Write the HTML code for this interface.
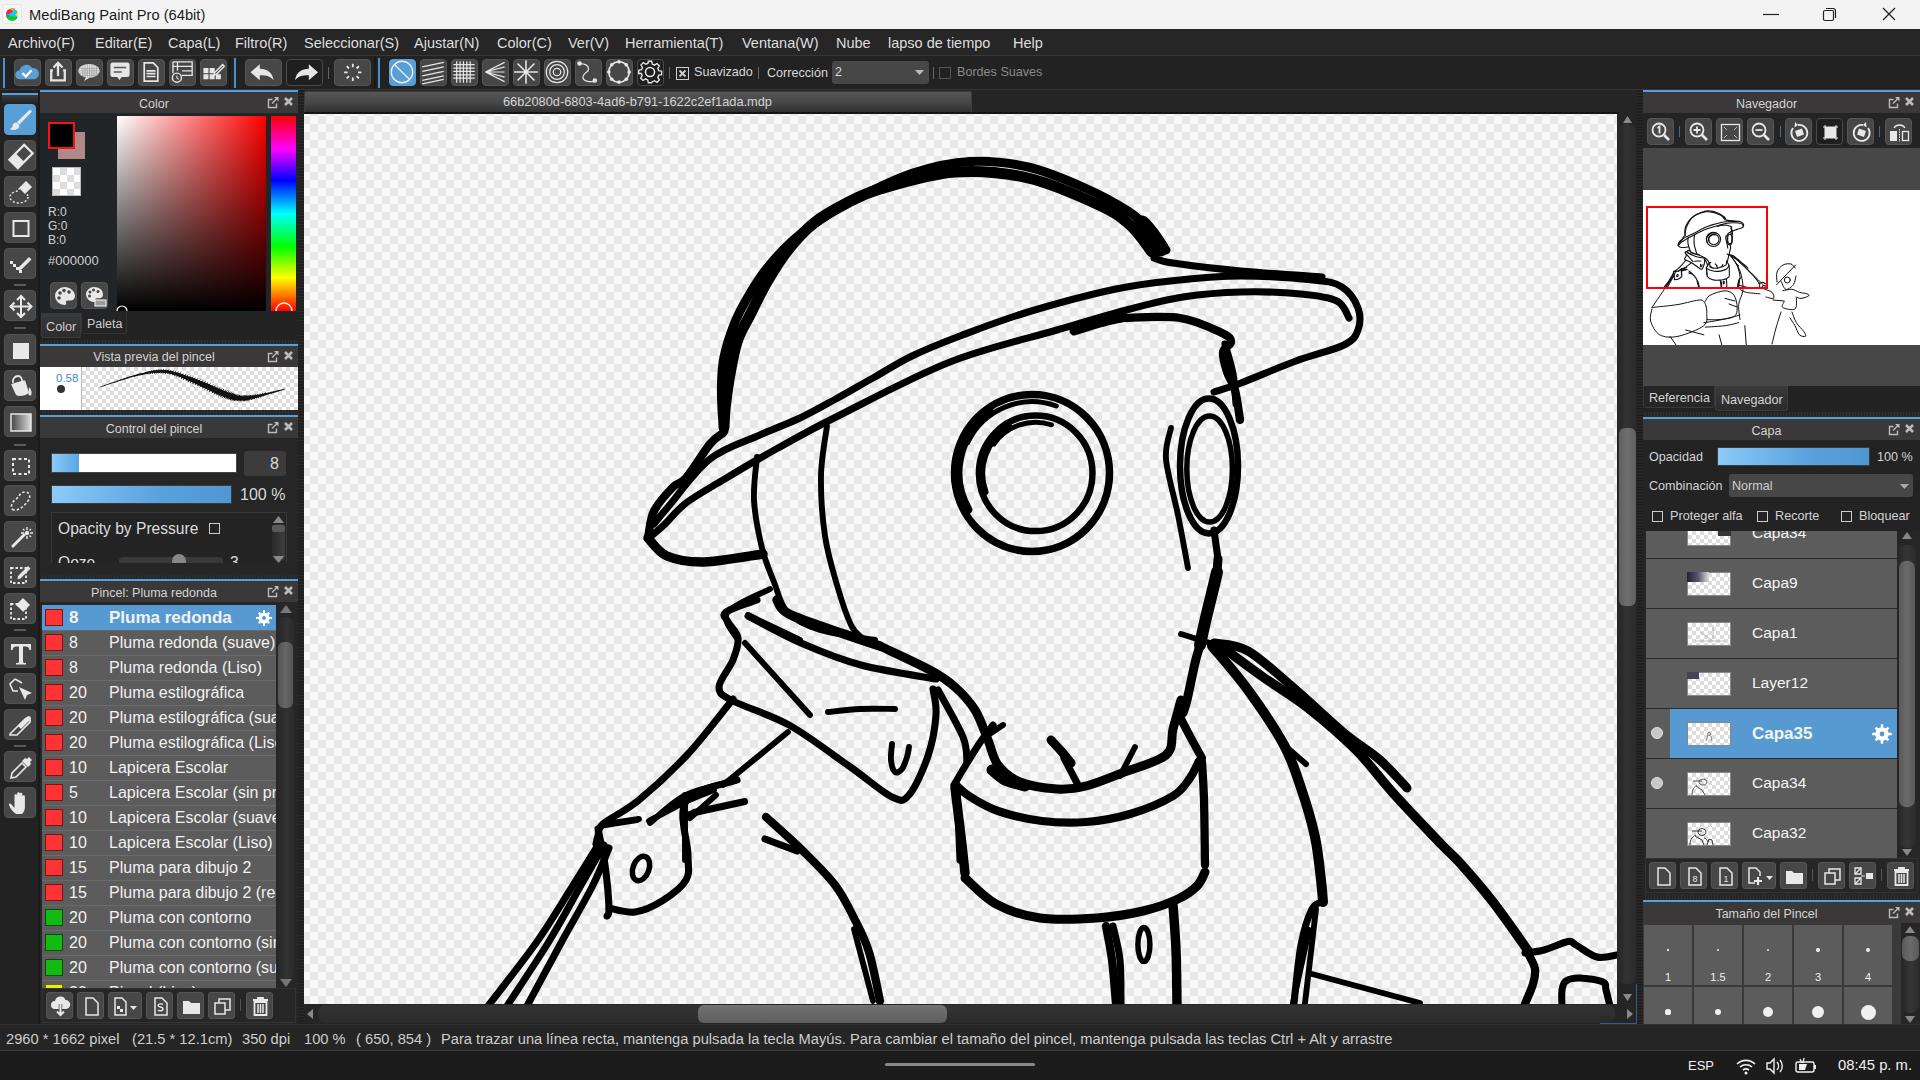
<!DOCTYPE html>
<html><head><meta charset="utf-8">
<style>
*{margin:0;padding:0;box-sizing:border-box}
html,body{width:1920px;height:1080px;overflow:hidden;background:#252525;font-family:"Liberation Sans",sans-serif;color:#d8d8d8}
.a{position:absolute}
.t{position:absolute;white-space:nowrap;line-height:1}
.b{position:absolute;width:27px;height:27px;background:#474747;border:1px solid #555;border-radius:4px}
.b svg,.tb svg,.lb svg{position:absolute;left:0;top:0}
.tt svg{transform:translate(-1.5px,-1.5px) scale(1.13)}
.tw svg{transform:translate(-0.7px,-1.2px) scale(1.15)}
.tb{position:absolute;left:4px;width:32px;height:31px;background:#474747;border:1px solid #525252;border-radius:4px}
.lb{position:absolute;width:27px;height:27px;background:#474747;border:1px solid #555;border-radius:3px}
.ph{position:absolute;height:23px;background:#3a3838;border-top:2px solid #55a0dc}
.pht{position:absolute;top:4px;left:0;width:100%;text-align:center;font-size:12.5px;color:#d4d4d4;line-height:1}
.chk{background-image:linear-gradient(45deg,#e8e8e8 25%,transparent 25%,transparent 75%,#e8e8e8 75%),linear-gradient(45deg,#e8e8e8 25%,transparent 25%,transparent 75%,#e8e8e8 75%);background-color:#f8f8f8}
.chk2{background-image:linear-gradient(45deg,#ddd 25%,transparent 25%,transparent 75%,#ddd 75%),linear-gradient(45deg,#ddd 25%,transparent 25%,transparent 75%,#ddd 75%);background-color:#fff;background-size:10px 10px;background-position:0 0,5px 5px}
.m{position:absolute;top:36px;font-size:14.5px;color:#dedede;white-space:nowrap;line-height:1}
.vl{position:absolute;width:1px;background:#666}
</style></head><body>
<!-- title bar -->
<div class="a" style="left:0;top:0;width:1920px;height:29px;background:#f3f3f3"></div>
<svg class="a" style="left:2px;top:4px" width="20" height="20" viewBox="0 0 20 20">
<rect x="0.5" y="0.5" width="19" height="19" rx="3" fill="#f7f7f7" stroke="#e4e4e4"/>
<circle cx="10" cy="10.5" r="6" fill="#14c8f0"/>
<path d="M4 10.5a6 6 0 0 1 4-5.6l3 2.2L7.5 10z" fill="#f22"/>
<path d="M8 4.9a6 6 0 0 1 5.5-.4L11 7.1z" fill="#f5a040"/>
<path d="M4.5 13a6 6 0 0 0 11 .5L10 12z" fill="#1c1"/>
<path d="M4 10.5a6 6 0 0 0 1.5 3.5L8 11.5z" fill="#3a7ad8"/>
<path d="M15.5 8a6 6 0 0 1 .5 4.5L13 11z" fill="#ee0"/>
</svg>
<div class="t" style="left:29px;top:8px;font-size:14.7px;color:#1b1b1b">MediBang Paint Pro (64bit)</div>
<svg class="a" style="left:1750px;top:0" width="170" height="29" viewBox="0 0 170 29">
<path d="M13 14.5h16" stroke="#222" stroke-width="1.2"/>
<rect x="73.5" y="10.5" width="10" height="10" rx="1.5" fill="none" stroke="#222" stroke-width="1.2"/>
<path d="M76 8.5h7a2.5 2.5 0 0 1 2.5 2.5v7" fill="none" stroke="#222" stroke-width="1.2"/>
<path d="M133 8l12 12M145 8l-12 12" stroke="#222" stroke-width="1.3"/>
</svg>

<!-- menu bar -->
<div class="a" style="left:0;top:29px;width:1920px;height:27px;background:#262626"></div>
<div class="m" style="left:8px">Archivo(F)</div>
<div class="m" style="left:95px">Editar(E)</div>
<div class="m" style="left:168px">Capa(L)</div>
<div class="m" style="left:235px">Filtro(R)</div>
<div class="m" style="left:304px">Seleccionar(S)</div>
<div class="m" style="left:414px">Ajustar(N)</div>
<div class="m" style="left:497px">Color(C)</div>
<div class="m" style="left:568px">Ver(V)</div>
<div class="m" style="left:625px">Herramienta(T)</div>
<div class="m" style="left:742px">Ventana(W)</div>
<div class="m" style="left:836px">Nube</div>
<div class="m" style="left:888px">lapso de tiempo</div>
<div class="m" style="left:1013px">Help</div>

<!-- toolbar -->
<div class="a" style="left:0;top:55px;width:1920px;height:35px;background:#252525;border-top:1px solid #383838;border-bottom:1px solid #353535"></div>
<div class="a" style="left:2px;top:56px;width:229px;height:33px;background:#222;border-right:2px solid #1a1a1a"></div>
<div class="a" style="left:232px;top:56px;width:144px;height:33px;background:#222;border-right:2px solid #1a1a1a"></div>
<div class="a" style="left:376px;top:56px;width:1544px;height:33px;background:#222"></div>
<div class="a" style="left:3px;top:58px;width:2px;height:30px;background:#4d8fcc"></div>
<div class="a" style="left:234px;top:58px;width:2px;height:30px;background:#4d8fcc"></div>
<div class="a" style="left:378px;top:58px;width:2px;height:30px;background:#4d8fcc"></div>
<div class="vl" style="left:328px;top:67px;height:12px"></div>
<div class="vl" style="left:669px;top:67px;height:12px"></div>
<div class="vl" style="left:758px;top:67px;height:12px"></div>
<div class="vl" style="left:933px;top:67px;height:12px"></div>

<div class="b tt" style="left:14px;top:59px"><svg width="27" height="27" viewBox="0 0 27 27"><path d="M7 20a4 4 0 0 1 0-8a6 6 0 0 1 11-2a4.5 4.5 0 0 1 2 10z" fill="#5a9fd8"/><path d="M9.5 14.5l3 3l5-5.5" fill="none" stroke="#fff" stroke-width="2"/></svg></div>
<div class="b tt" style="left:45px;top:59px"><svg width="27" height="27" viewBox="0 0 27 27"><path d="M9 12H7.5v9h12v-9H18" fill="none" stroke="#e6e6e6" stroke-width="2"/><path d="M13.5 17V6M9.5 9.5l4-4l4 4" fill="none" stroke="#e6e6e6" stroke-width="2"/></svg></div>
<div class="b tt" style="left:76px;top:59px"><svg width="27" height="27" viewBox="0 0 27 27"><ellipse cx="13.5" cy="12.5" rx="9.5" ry="6" fill="#e6e6e6"/><path d="M11 18l-2 3.5l5-3z" fill="#e6e6e6"/><path d="M8 8.5v8M10 7v11M12 7v11M14 7v11M16 7v11M18 7v11M20 8v8M5 10.5h17M4 12.5h19M4 14.5h19M6 16.5h15" stroke="#888" stroke-width="0.5"/></svg></div>
<div class="b tt" style="left:107px;top:59px"><svg width="27" height="27" viewBox="0 0 27 27"><path d="M5 7a2 2 0 0 1 2-2h13a2 2 0 0 1 2 2v9a2 2 0 0 1-2 2h-5l-2 2.5l-2-2.5H7a2 2 0 0 1-2-2z" fill="#e6e6e6"/><path d="M8 9.5h11M8 13.5h7" stroke="#555" stroke-width="1.5"/></svg></div>
<div class="b tt" style="left:138px;top:59px"><svg width="27" height="27" viewBox="0 0 27 27"><path d="M7.5 5.5h8l4 4v12h-12z" fill="none" stroke="#e6e6e6" stroke-width="1.5"/><path d="M9.5 12.5h8M9.5 15h8M9.5 17.5h8" stroke="#e6e6e6" stroke-width="1.5"/></svg></div>
<div class="b tt" style="left:169px;top:59px"><svg width="27" height="27" viewBox="0 0 27 27"><path d="M5.5 4.5h17v12h-9M5.5 4.5v10M5.5 8.5h17M9.5 4.5v8M13.5 12.5h9" fill="none" stroke="#e6e6e6" stroke-width="1.2"/><circle cx="9" cy="18.5" r="4" fill="#474747" stroke="#e6e6e6" stroke-width="1.3"/><path d="M9 16.5v2l1.5 1.5" stroke="#e6e6e6" stroke-width="1"/></svg></div>
<div class="b tt" style="left:200px;top:59px"><svg width="27" height="27" viewBox="0 0 27 27"><path d="M5 10h4.5v4.5H5zM10.5 10h4.5v4.5h-4.5zM5 15.5h4.5V20H5zM10.5 15.5h4.5V20h-4.5zM16 15.5h4.5V20H16z" fill="#e6e6e6"/><path d="M15 14l7-7l1.5 1.5l-7 7l-2.3.8z" fill="none" stroke="#e6e6e6" stroke-width="1.3"/></svg></div>

<div class="b tw" style="left:245px;top:59px;width:37px"><svg width="37" height="27" viewBox="0 0 37 27"><path d="M7 13.5l8-7v4c6 0 11 3 12 10c-2.5-3.5-6-4.5-12-4.5v4.5z" fill="#e6e6e6"/></svg></div>
<div class="b tw" style="left:286px;top:59px;width:37px;background:#1f1f1f;border-color:#4a4a4a"><svg width="37" height="27" viewBox="0 0 37 27"><path d="M30 13.5l-8-7v4c-6 0-11 3-12 10c2.5-3.5 6-4.5 12-4.5v4.5z" fill="#e6e6e6"/></svg></div>
<div class="b tw" style="left:334px;top:59px;width:37px"><svg width="37" height="27" viewBox="0 0 37 27"><path d="M18.5 6v3M18.5 18v3M11 13.5h3M23 13.5h3M13.2 8.2l2 2M21.8 16.8l2 2M23.8 8.2l-2 2M15.2 16.8l-2 2" stroke="#e6e6e6" stroke-width="1.6"/></svg></div>

<div class="b tt" style="left:389px;top:59px;background:#579fd6;border-color:#579fd6"><svg width="27" height="27" viewBox="0 0 27 27"><circle cx="13.5" cy="13.5" r="9.5" fill="none" stroke="#eee" stroke-width="1.2"/><path d="M7 7l13 13" stroke="#eee" stroke-width="1.2"/></svg></div>
<div class="b tt" style="left:420px;top:59px"><svg width="27" height="27" viewBox="0 0 27 27"><path d="M4 9l19-4M4 13l19-4M4 17l19-4M4 21l19-4M4 24l19-4" stroke="#e6e6e6" stroke-width="1.1"/></svg></div>
<div class="b tt" style="left:451px;top:59px"><svg width="27" height="27" viewBox="0 0 27 27"><path d="M7 4v19M10 4v19M13 4v19M16 4v19M19 4v19M4 7h19M4 10h19M4 13h19M4 16h19M4 19h19" stroke="#e6e6e6" stroke-width="1.1"/></svg></div>
<div class="b tt" style="left:482px;top:59px"><svg width="27" height="27" viewBox="0 0 27 27"><path d="M5 13.5L22 5M5 13.5L22 9M5 13.5h17M5 13.5L22 18M5 13.5L22 22" stroke="#e6e6e6" stroke-width="1.1"/></svg></div>
<div class="b tt" style="left:513px;top:59px"><svg width="27" height="27" viewBox="0 0 27 27"><path d="M13.5 3v21M3 13.5h21M6 6l15 15M21 6L6 21" stroke="#e6e6e6" stroke-width="1.4"/></svg></div>
<div class="b tt" style="left:544px;top:59px"><svg width="27" height="27" viewBox="0 0 27 27" fill="none" stroke="#e6e6e6" stroke-width="1.1"><circle cx="13.5" cy="13.5" r="9.5"/><circle cx="13.5" cy="13.5" r="6.5"/><circle cx="13.5" cy="13.5" r="3.3"/></svg></div>
<div class="b tt" style="left:575px;top:59px"><svg width="27" height="27" viewBox="0 0 27 27"><path d="M6 6c5 0 8 2 8 5s-5 3-5 7s5 4 10 4" fill="none" stroke="#e6e6e6" stroke-width="1.1"/><circle cx="6" cy="6" r="2" fill="#e6e6e6"/><circle cx="19.5" cy="21" r="2" fill="#e6e6e6"/></svg></div>
<div class="b tt" style="left:606px;top:59px"><svg width="27" height="27" viewBox="0 0 27 27"><circle cx="13.5" cy="13.5" r="9" fill="none" stroke="#e6e6e6" stroke-width="1.4"/><g fill="#e6e6e6"><circle cx="13.5" cy="4.5" r="1.6"/><circle cx="13.5" cy="22.5" r="1.6"/><circle cx="4.5" cy="13.5" r="1.6"/><circle cx="22.5" cy="13.5" r="1.6"/><circle cx="7.1" cy="7.1" r="1.6"/><circle cx="19.9" cy="7.1" r="1.6"/><circle cx="7.1" cy="19.9" r="1.6"/><circle cx="19.9" cy="19.9" r="1.6"/></g></svg></div>
<div class="b tt" style="left:637px;top:59px;background:#1f1f1f;border-color:#4a4a4a"><svg width="27" height="27" viewBox="0 0 27 27"><path d="M12 4h3l.5 2.5l2 .9l2.2-1.4l2.1 2.1l-1.4 2.2l.9 2l2.5.5v3l-2.5.5l-.9 2l1.4 2.2l-2.1 2.1l-2.2-1.4l-2 .9L15 23h-3l-.5-2.5l-2-.9l-2.2 1.4l-2.1-2.1l1.4-2.2l-.9-2L3.5 15v-3l2.5-.5l.9-2l-1.4-2.2l2.1-2.1l2.2 1.4l2-.9z" fill="none" stroke="#e6e6e6" stroke-width="1.2"/><circle cx="13.5" cy="13.5" r="4" fill="none" stroke="#e6e6e6" stroke-width="1.4"/></svg></div>

<svg class="a" style="left:676px;top:67px" width="13" height="13" viewBox="0 0 13 13"><rect x="0.5" y="0.5" width="12" height="12" fill="none" stroke="#d0d0d0"/><path d="M3.5 3.5l6 6M9.5 3.5l-6 6" stroke="#d0d0d0" stroke-width="1.8"/></svg>
<div class="t" style="left:694px;top:66px;font-size:12.6px;color:#d8d8d8">Suavizado</div>
<div class="t" style="left:767px;top:67px;font-size:12.6px;color:#d8d8d8">Corrección</div>
<div class="a" style="left:832px;top:61px;width:97px;height:23px;background:#474747;border-radius:3px"></div>
<div class="t" style="left:835px;top:66px;font-size:12.6px;color:#d8d8d8">2</div>
<svg class="a" style="left:915px;top:70px" width="9" height="6" viewBox="0 0 9 6"><path d="M0 0h9L4.5 5z" fill="#bbb"/></svg>
<svg class="a" style="left:939px;top:67px" width="12" height="12" viewBox="0 0 12 12"><rect x="0.5" y="0.5" width="11" height="11" fill="none" stroke="#555"/></svg>
<div class="t" style="left:957px;top:66px;font-size:12.6px;color:#8a8a8a">Bordes Suaves</div>

<!-- canvas tab strip -->
<div class="a" style="left:304px;top:90px;width:1334px;height:24px;background:#252525"></div>
<div class="a" style="left:304px;top:91px;width:668px;height:22px;background:linear-gradient(#575757,#464646 50%,#333 90%,#2c2c2c);border:1px solid #3c3c3c;border-bottom:none;border-radius:2px 2px 0 0"></div>
<div class="t" style="left:503px;top:96px;font-size:12.8px;color:#d4d4d4">66b2080d-6803-4ad6-b791-1622c2ef1ada.mdp</div>
<div class="a" style="left:304px;top:112px;width:1314px;height:2px;background:#151515"></div>

<!-- canvas -->
<div class="a chk" style="left:304px;top:114px;width:1313px;height:890px;background-size:16px 16px;background-position:6px 2px,14px 10px"></div>
<svg class="a" style="left:0;top:0" width="1920" height="1080" viewBox="0 0 1920 1080"><defs><clipPath id="cc"><rect x="304" y="114" width="1313" height="890"/></clipPath></defs><g clip-path="url(#cc)" fill="none" stroke="#000" stroke-linecap="round" stroke-linejoin="round"><path d="M1166.0 250.0C1163.3 246.7 1156.3 236.5 1150.0 230.0C1143.7 223.5 1138.8 218.0 1128.0 211.0C1117.2 204.0 1101.7 195.3 1085.0 188.0C1068.3 180.7 1047.2 171.4 1028.0 167.0C1008.8 162.6 989.2 160.5 970.0 161.5C950.8 162.5 932.2 166.8 913.0 173.0C893.8 179.2 870.5 191.2 855.0 199.0C839.5 206.8 830.8 212.7 820.0 220.0C809.2 227.3 799.3 234.3 790.0 243.0C780.7 251.7 771.5 262.2 764.0 272.0C756.5 281.8 750.2 292.8 745.0 302.0C739.8 311.2 736.5 317.8 733.0 327.0C729.5 336.2 725.9 347.7 724.0 357.0C722.1 366.3 721.8 374.2 721.5 383.0C721.2 391.8 721.6 402.0 722.0 410.0C722.4 418.0 723.7 427.5 724.0 431.0" stroke-width="9"/><path d="M1152.0 252.0C1148.3 247.5 1138.8 232.8 1130.0 225.0C1121.2 217.2 1116.0 212.8 1099.0 205.0C1082.0 197.2 1052.0 183.5 1028.0 178.0C1004.0 172.5 979.7 170.2 955.0 172.0C930.3 173.8 898.3 183.7 880.0 189.0C861.7 194.3 856.0 198.3 845.0 204.0C834.0 209.7 823.5 215.3 814.0 223.0C804.5 230.7 795.8 240.2 788.0 250.0C780.2 259.8 773.3 271.2 767.0 282.0C760.7 292.8 755.0 305.0 750.0 315.0C745.0 325.0 740.5 331.2 737.0 342.0C733.5 352.8 731.0 368.7 729.0 380.0C727.0 391.3 725.8 402.2 725.0 410.0C724.2 417.8 724.2 424.2 724.0 427.0" stroke-width="11"/><path d="M1142.0 224.0C1143.7 226.0 1149.0 232.0 1152.0 236.0C1155.0 240.0 1158.7 246.0 1160.0 248.0" stroke-width="17"/><path d="M723.0 433.0C720.8 434.8 716.2 436.5 710.0 444.0C703.8 451.5 692.2 470.8 686.0 478.0C679.8 485.2 678.3 481.5 673.0 487.0C667.7 492.5 658.1 503.0 654.0 511.0C649.9 519.0 649.4 531.0 648.5 535.0" stroke-width="8.26"/><path d="M1154.0 258.0C1157.2 258.8 1158.5 260.8 1173.0 263.0C1187.5 265.2 1216.2 268.7 1241.0 271.0C1265.8 273.3 1308.5 276.0 1322.0 277.0" stroke-width="7.08"/><path d="M654.0 524.0C656.3 521.2 658.7 517.8 668.0 507.0C677.3 496.2 694.7 471.0 710.0 459.0C725.3 447.0 745.0 441.8 760.0 435.0C775.0 428.2 787.7 423.8 800.0 418.0C812.3 412.2 821.8 406.7 834.0 400.0C846.2 393.3 860.0 385.3 873.0 378.0C886.0 370.7 897.5 363.0 912.0 356.0C926.5 349.0 940.7 343.3 960.0 336.0C979.3 328.7 1002.0 319.8 1028.0 312.0C1054.0 304.2 1090.7 294.3 1116.0 289.0C1141.3 283.7 1159.2 282.2 1180.0 280.0C1200.8 277.8 1218.8 276.0 1241.0 276.0C1263.2 276.0 1296.2 278.2 1313.0 280.0C1329.8 281.8 1334.5 282.3 1342.0 287.0C1349.5 291.7 1355.3 300.8 1358.0 308.0C1360.7 315.2 1360.3 323.8 1358.0 330.0C1355.7 336.2 1354.3 339.8 1344.0 345.0C1333.7 350.2 1313.2 354.7 1296.0 361.0C1278.8 367.3 1254.7 377.8 1241.0 383.0C1227.3 388.2 1218.5 390.5 1214.0 392.0" stroke-width="7.08"/><path d="M650.0 537.0C652.3 535.0 658.0 530.7 664.0 525.0C670.0 519.3 676.2 510.5 686.0 503.0C695.8 495.5 707.7 489.2 723.0 480.0C738.3 470.8 758.8 458.7 778.0 448.0C797.2 437.3 809.3 430.3 838.0 416.0C866.7 401.7 913.5 376.3 950.0 362.0C986.5 347.7 1027.0 338.8 1057.0 330.0C1087.0 321.2 1109.0 314.5 1130.0 309.0C1151.0 303.5 1164.5 299.8 1183.0 297.0C1201.5 294.2 1221.3 292.5 1241.0 292.0C1260.7 291.5 1285.0 292.5 1301.0 294.0C1317.0 295.5 1329.0 297.0 1337.0 301.0C1345.0 305.0 1347.0 315.2 1349.0 318.0" stroke-width="7.08"/><path d="M648.0 538.0C651.2 541.0 657.7 552.0 667.0 556.0C676.3 560.0 688.0 562.3 704.0 562.0C720.0 561.7 753.2 555.3 763.0 554.0" stroke-width="9.44"/><path d="M1074.0 331.0C1078.3 329.7 1092.2 325.2 1100.0 323.0C1107.8 320.8 1117.5 318.8 1121.0 318.0" stroke-width="9"/><path d="M1121.0 318.0C1130.8 318.0 1163.2 315.5 1180.0 318.0C1196.8 320.5 1213.5 329.0 1222.0 333.0C1230.5 337.0 1230.8 338.8 1231.0 342.0C1231.2 345.2 1223.7 347.0 1223.0 352.0C1222.3 357.0 1225.0 365.7 1227.0 372.0C1229.0 378.3 1232.8 382.0 1235.0 390.0C1237.2 398.0 1239.2 415.0 1240.0 420.0" stroke-width="8.26"/><path d="M757.0 457.0C756.5 464.2 753.2 484.8 754.0 500.0C754.8 515.2 758.7 534.3 762.0 548.0C765.3 561.7 769.7 571.2 774.0 582.0C778.3 592.8 780.3 605.0 788.0 613.0C795.7 621.0 805.5 625.5 820.0 630.0C834.5 634.5 865.8 638.3 875.0 640.0" stroke-width="5.9"/><path d="M827.0 426.0C826.0 434.3 821.3 457.7 821.0 476.0C820.7 494.3 822.3 517.8 825.0 536.0C827.7 554.2 832.7 570.2 837.0 585.0C841.3 599.8 846.8 616.2 851.0 625.0C855.2 633.8 860.2 635.8 862.0 638.0" stroke-width="5.9"/><path d="M1225.0 344.0C1226.3 349.0 1231.2 364.0 1233.0 374.0C1234.8 384.0 1235.5 399.0 1236.0 404.0" stroke-width="7.08"/><path d="M1214.0 530.0L1218.0 559.0" stroke-width="7.08"/><path d="M1218.0 559.0L1217.0 572.0" stroke-width="9"/><path d="M1217.0 572.0C1216.5 574.2 1216.0 576.7 1214.0 585.0C1212.0 593.3 1207.3 612.0 1205.0 622.0C1202.7 632.0 1200.8 641.2 1200.0 645.0" stroke-width="12"/><path d="M1200.0 645.0C1199.2 648.0 1197.2 653.8 1195.0 663.0C1192.8 672.2 1189.0 691.7 1187.0 700.0C1185.0 708.3 1183.7 710.8 1183.0 713.0" stroke-width="9"/><path d="M1171.0 428.0C1170.2 433.2 1164.8 444.5 1166.0 459.0C1167.2 473.5 1174.3 496.8 1178.0 515.0C1181.7 533.2 1186.3 559.2 1188.0 568.0" stroke-width="5.9"/><path d="M880.0 646.0C888.3 650.0 917.5 663.2 930.0 670.0C942.5 676.8 947.5 680.3 955.0 687.0C962.5 693.7 969.5 701.2 975.0 710.0C980.5 718.8 984.2 730.8 988.0 740.0C991.8 749.2 992.7 758.0 998.0 765.0C1003.3 772.0 1010.2 778.0 1020.0 782.0C1029.8 786.0 1046.0 788.3 1057.0 789.0C1068.0 789.7 1075.2 788.7 1086.0 786.0C1096.8 783.3 1108.7 778.2 1122.0 773.0C1135.3 767.8 1157.5 762.3 1166.0 755.0C1174.5 747.7 1170.5 738.2 1173.0 729.0C1175.5 719.8 1179.7 704.8 1181.0 700.0" stroke-width="9"/><path d="M992.0 770.0C994.2 771.7 999.5 777.3 1005.0 780.0C1010.5 782.7 1021.7 785.0 1025.0 786.0" stroke-width="11"/><path d="M954.0 785.0C955.7 782.2 959.8 774.8 964.0 768.0C968.2 761.2 974.2 751.2 979.0 744.0C983.8 736.8 990.7 728.2 993.0 725.0" stroke-width="7.08"/><path d="M956.0 785.0C958.2 786.8 962.0 791.7 969.0 796.0C976.0 800.3 985.8 806.8 998.0 811.0C1010.2 815.2 1027.3 819.2 1042.0 821.0C1056.7 822.8 1071.3 823.2 1086.0 822.0C1100.7 820.8 1115.5 818.3 1130.0 814.0C1144.5 809.7 1163.0 802.0 1173.0 796.0C1183.0 790.0 1185.7 783.8 1190.0 778.0C1194.3 772.2 1197.5 763.8 1199.0 761.0" stroke-width="8.26"/><path d="M955.0 788.0C955.7 793.3 957.8 810.5 959.0 820.0C960.2 829.5 961.0 836.2 962.0 845.0C963.0 853.8 964.5 868.3 965.0 873.0" stroke-width="9.44"/><path d="M1202.0 762.0C1202.3 768.3 1203.5 782.8 1204.0 800.0C1204.5 817.2 1204.8 854.2 1205.0 865.0" stroke-width="8.26"/><path d="M1181.0 719.0C1182.8 722.5 1188.5 733.5 1192.0 740.0C1195.5 746.5 1200.3 755.0 1202.0 758.0" stroke-width="8.26"/><path d="M965.0 878.0C970.2 882.3 983.5 897.3 996.0 904.0C1008.5 910.7 1023.2 915.7 1040.0 918.0C1056.8 920.3 1079.8 919.2 1097.0 918.0C1114.2 916.8 1129.5 914.2 1143.0 911.0C1156.5 907.8 1169.0 903.2 1178.0 899.0C1187.0 894.8 1192.5 890.5 1197.0 886.0C1201.5 881.5 1203.7 874.3 1205.0 872.0" stroke-width="9"/><path d="M1051.0 740.0C1052.8 742.0 1058.7 748.2 1062.0 752.0C1065.3 755.8 1069.5 761.2 1071.0 763.0" stroke-width="9"/><path d="M1064.0 758.0L1078.0 785.0" stroke-width="7.08"/><path d="M1135.0 747.0L1120.0 776.0" stroke-width="5.9"/><path d="M988.0 735.0L1003.0 725.0" stroke-width="5.9"/><path d="M1106.0 926.0C1107.0 931.7 1110.3 947.0 1112.0 960.0C1113.7 973.0 1115.3 996.7 1116.0 1004.0" stroke-width="8.26"/><path d="M1113.0 926.0C1114.2 931.7 1118.7 947.0 1120.0 960.0C1121.3 973.0 1120.8 996.7 1121.0 1004.0" stroke-width="7.08"/><path d="M1173.0 905.0C1173.5 912.5 1175.3 933.5 1176.0 950.0C1176.7 966.5 1176.8 995.0 1177.0 1004.0" stroke-width="9.44"/><path d="M770.0 589.0C762.8 593.0 732.3 604.5 727.0 613.0C721.7 621.5 736.2 635.5 738.0 640.0" stroke-width="5.9"/><path d="M748.0 615.0L800.0 640.0" stroke-width="5.9"/><path d="M757.0 600.0C751.8 602.0 730.8 608.3 726.0 612.0C721.2 615.7 726.0 617.7 728.0 622.0C730.0 626.3 737.2 631.7 738.0 638.0C738.8 644.3 736.2 651.8 733.0 660.0C729.8 668.2 719.0 680.2 719.0 687.0C719.0 693.8 721.3 694.7 733.0 701.0C744.7 707.3 769.7 714.2 789.0 725.0C808.3 735.8 831.8 754.0 849.0 766.0C866.2 778.0 882.0 792.2 892.0 797.0C902.0 801.8 903.0 801.8 909.0 795.0C915.0 788.2 923.5 769.3 928.0 756.0C932.5 742.7 935.2 726.2 936.0 715.0C936.8 703.8 933.5 693.3 933.0 689.0" stroke-width="7.08"/><path d="M748.0 616.0C756.8 620.5 782.2 634.8 801.0 643.0C819.8 651.2 838.5 659.0 861.0 665.0C883.5 671.0 923.5 676.7 936.0 679.0" stroke-width="7.08"/><path d="M777.0 600.0C779.0 602.3 777.8 608.3 789.0 614.0C800.2 619.7 828.8 628.7 844.0 634.0C859.2 639.3 874.0 644.0 880.0 646.0" stroke-width="9.44"/><path d="M745.0 643.0L810.0 715.0" stroke-width="5.9"/><path d="M828.0 712.0C833.3 711.5 848.8 709.5 860.0 709.0C871.2 708.5 889.2 709.0 895.0 709.0" stroke-width="5.9"/><path d="M892.0 744.0C891.8 746.7 890.5 755.3 891.0 760.0C891.5 764.7 893.2 770.5 895.0 772.0C896.8 773.5 900.0 771.5 902.0 769.0C904.0 766.5 905.8 760.7 907.0 757.0C908.2 753.3 908.7 748.7 909.0 747.0" stroke-width="5.9"/><path d="M938.0 690.0C942.2 697.8 958.2 725.0 963.0 737.0C967.8 749.0 966.3 757.8 967.0 762.0" stroke-width="7.08"/><path d="M957.0 788.0L960.0 860.0" stroke-width="7.08"/><path d="M733.0 699.0C725.5 708.2 703.7 737.2 688.0 754.0C672.3 770.8 653.2 788.3 639.0 800.0C624.8 811.7 609.8 818.0 603.0 824.0C596.2 830.0 599.2 832.7 598.0 836.0C596.8 839.3 596.3 842.7 596.0 844.0" stroke-width="7.08"/><path d="M606.0 824.0L639.0 819.0" stroke-width="5.9"/><path d="M649.0 821.0C655.0 817.8 674.2 807.2 685.0 802.0C695.8 796.8 709.2 792.0 714.0 790.0" stroke-width="5.9"/><path d="M685.0 795.0L685.0 860.0" stroke-width="5.9"/><path d="M690.0 814.0L745.0 802.0" stroke-width="5.9"/><path d="M766.0 817.0C772.2 822.7 791.5 839.7 803.0 851.0C814.5 862.3 826.5 873.8 835.0 885.0C843.5 896.2 848.3 906.8 854.0 918.0C859.7 929.2 864.7 938.2 869.0 952.0C873.3 965.8 878.2 992.8 880.0 1001.0" stroke-width="8.26"/><path d="M854.0 929.0L873.0 1001.0" stroke-width="5.9"/><path d="M765.0 839.0L797.0 851.0" stroke-width="7.08"/><path d="M723.0 785.0L788.0 732.0" stroke-width="5.9"/><path d="M598.0 829.0C599.2 835.0 603.2 851.8 605.0 865.0C606.8 878.2 608.7 899.5 609.0 908.0C609.3 916.5 607.3 914.7 607.0 916.0" stroke-width="7.08"/><path d="M609.0 908.0C613.3 908.7 626.2 913.2 635.0 912.0C643.8 910.8 653.5 906.3 662.0 901.0C670.5 895.7 681.7 887.7 686.0 880.0C690.3 872.3 688.0 868.2 688.0 855.0C688.0 841.8 677.8 813.5 686.0 801.0C694.2 788.5 728.5 783.5 737.0 780.0" stroke-width="7.08"/><path d="M605.0 825.0L637.0 820.0" stroke-width="5.9"/><path d="M650.0 823.0C656.0 818.3 671.5 802.2 686.0 795.0C700.5 787.8 728.5 782.5 737.0 780.0" stroke-width="5.9"/><path d="M690.0 818.0L716.0 795.0" stroke-width="5.9"/><path d="M694.0 812.0L745.0 801.0" stroke-width="5.9"/><path d="M600.0 842.0C595.3 849.5 582.7 870.2 572.0 887.0C561.3 903.8 550.0 923.2 536.0 943.0C522.0 962.8 496.0 995.5 488.0 1006.0" stroke-width="7.08"/><path d="M604.0 845.0C600.0 852.0 589.3 870.7 580.0 887.0C570.7 903.3 560.2 923.2 548.0 943.0C535.8 962.8 513.8 995.5 507.0 1006.0" stroke-width="7.08"/><path d="M609.0 848.0C606.2 854.5 600.0 871.2 592.0 887.0C584.0 902.8 571.8 923.2 561.0 943.0C550.2 962.8 532.7 995.5 527.0 1006.0" stroke-width="7.08"/><path d="M1181.0 634.0L1210.0 643.0" stroke-width="5.9"/><path d="M1214.0 643.0C1219.7 644.3 1234.3 643.2 1248.0 651.0C1261.7 658.8 1280.0 676.3 1296.0 690.0C1312.0 703.7 1330.0 721.3 1344.0 733.0C1358.0 744.7 1369.5 750.8 1380.0 760.0C1390.5 769.2 1402.5 783.3 1407.0 788.0" stroke-width="9"/><path d="M1222.0 647.0C1228.8 652.0 1248.7 666.8 1263.0 677.0C1277.3 687.2 1292.5 695.8 1308.0 708.0C1323.5 720.2 1341.8 735.8 1356.0 750.0C1370.2 764.2 1378.8 777.3 1393.0 793.0C1407.2 808.7 1429.8 832.3 1441.0 844.0C1452.2 855.7 1451.3 853.3 1460.0 863.0C1468.7 872.7 1481.5 887.2 1493.0 902.0C1504.5 916.8 1523.0 943.7 1529.0 952.0" stroke-width="9.44"/><path d="M1212.0 646.0C1218.0 653.3 1236.0 673.5 1248.0 690.0C1260.0 706.5 1275.2 728.7 1284.0 745.0C1292.8 761.3 1295.8 772.7 1301.0 788.0C1306.2 803.3 1311.7 821.7 1315.0 837.0C1318.3 852.3 1319.7 869.2 1321.0 880.0C1322.3 890.8 1322.7 898.3 1323.0 902.0" stroke-width="10"/><path d="M1284.0 745.0L1306.0 764.0" stroke-width="5.9"/><path d="M1323.0 902.0C1321.2 903.2 1315.7 901.8 1312.0 909.0C1308.3 916.2 1304.0 929.3 1301.0 945.0C1298.0 960.7 1295.2 993.3 1294.0 1003.0" stroke-width="7.08"/><path d="M1316.0 909.0L1305.0 1003.0" stroke-width="5.9"/><path d="M1309.0 930.0L1293.0 1003.0" stroke-width="5.9"/><path d="M1312.0 974.0L1420.0 1003.0" stroke-width="5.9"/><path d="M1525.0 953.0C1528.2 952.5 1536.8 951.9 1544.0 950.0C1551.2 948.1 1562.7 942.3 1568.0 941.5C1573.3 940.7 1571.2 942.4 1576.0 945.0C1580.8 947.6 1590.2 955.3 1597.0 957.0C1603.8 958.7 1613.7 955.3 1617.0 955.0" stroke-width="7.08"/><path d="M1529.0 955.0C1530.0 957.3 1534.3 964.2 1535.0 969.0C1535.7 973.8 1534.7 978.2 1533.0 984.0C1531.3 989.8 1526.3 1000.7 1525.0 1004.0" stroke-width="8.26"/><path d="M1562.0 1006.0C1562.0 1003.3 1561.3 994.2 1562.0 990.0C1562.7 985.8 1563.0 983.0 1566.0 981.0C1569.0 979.0 1573.8 977.8 1580.0 978.0C1586.2 978.2 1598.7 980.0 1603.0 982.0C1607.3 984.0 1604.8 986.0 1606.0 990.0C1607.2 994.0 1609.3 1003.3 1610.0 1006.0" stroke-width="7.08"/><ellipse cx="1032" cy="473" rx="77.5" ry="78.5" stroke-width="7.5"/><ellipse cx="1035.7" cy="473.3" rx="56.8" ry="57.8" stroke-width="6.5"/><ellipse cx="1209" cy="466" rx="29" ry="67.4" stroke-width="6.5"/><ellipse cx="1209.6" cy="469" rx="22.8" ry="53" stroke-width="5.5"/><ellipse cx="641" cy="868.5" rx="8" ry="12.7" stroke-width="5.5" transform="rotate(20 641 868.5)"/><ellipse cx="1143.9" cy="944.5" rx="6" ry="17" stroke-width="5.5"/><path d="M967.7 442.7A71 71 0 0 1 1056.3 406.0" stroke-width="5"/><path d="M967.9 509.7A74 74 0 0 1 989.6 412.1" stroke-width="9"/><path d="M993.9 444.0A51 51 0 0 1 1051.5 424.8" stroke-width="5"/><path d="M985.0 491.8A54 54 0 0 1 1008.7 426.5" stroke-width="7"/></g></svg>

<!-- ===== left tool column ===== -->
<div class="a" style="left:0;top:90px;width:40px;height:934px;background:#222"></div>
<div class="a" style="left:2px;top:93px;width:36px;height:2px;background:#55a0dc"></div>
<div class="a" style="left:2px;top:95px;width:36px;height:8px;background:linear-gradient(#3a3a3a,#252525)"></div>
<div class="a" style="left:38px;top:90px;width:2px;height:934px;background:#1a1a1a"></div>

<div class="tb" style="top:104px;background:#579fd6;border-color:#579fd6"><svg width="32" height="31" viewBox="0 0 32 31"><path d="M12 17l13-12.5l2 2L14.5 19.5z" fill="#e8e8e8"/><path d="M11.5 17.5c-2.5 0-4 1.6-4 3.5c0 1.3-1.2 2.5-3 3c3 1.5 8 1.2 9.5-1.5c.8-1.5.3-3.6-2.5-5z" fill="#e8e8e8"/></svg></div>
<div class="tb" style="top:140px"><svg width="32" height="31" viewBox="0 0 32 31"><g transform="rotate(-45 16 15.5)"><rect x="5.5" y="9.5" width="21" height="12" fill="none" stroke="#e8e8e8" stroke-width="2.2"/><rect x="5.5" y="9.5" width="9" height="12" fill="#e8e8e8"/></g></svg></div>
<div class="tb" style="top:176px"><svg width="32" height="31" viewBox="0 0 32 31"><ellipse cx="14" cy="20" rx="9" ry="6" fill="none" stroke="#e8e8e8" stroke-width="1.4" stroke-dasharray="2 2"/><path d="M21 4l6 6l-8 8l-6-6z" fill="#e8e8e8"/><path d="M15 12l6 6l-2 2l-6-6z" fill="#474747"/></svg></div>
<div class="tb" style="top:212px"><svg width="32" height="31" viewBox="0 0 32 31"><rect x="8.5" y="8" width="15" height="15" fill="none" stroke="#e8e8e8" stroke-width="2"/></svg></div>
<div class="tb" style="top:248px"><svg width="32" height="31" viewBox="0 0 32 31"><path d="M5 12h3v3H5zM8 15h3v3H8zM11 18h3v3h-3zM14 21h3v3h-3z" fill="#e8e8e8"/><path d="M14 18l10-10l2.5 2.5l-10 10l-3 .8z" fill="#e8e8e8"/></svg></div>
<div class="a" style="left:14px;top:284px;width:12px;height:2px;background:#5a5a5a"></div>
<div class="tb" style="top:290px"><svg width="32" height="31" viewBox="0 0 32 31"><path d="M16 5v21M5.5 15.5h21" stroke="#e8e8e8" stroke-width="2"/><path d="M12 9l4-4l4 4M12 22l4 4l4-4M9.5 11.5l-4 4l4 4M22.5 11.5l4 4l-4 4" fill="none" stroke="#e8e8e8" stroke-width="2"/></svg></div>
<div class="a" style="left:14px;top:327px;width:12px;height:2px;background:#5a5a5a"></div>
<div class="tb" style="top:334px"><svg width="32" height="31" viewBox="0 0 32 31"><rect x="8" y="8" width="16" height="16" fill="#e8e8e8"/></svg></div>
<div class="tb" style="top:370px"><svg width="32" height="31" viewBox="0 0 32 31"><path d="M6 13l14-4l4 13c-4 3-10 4-13 2z" fill="#e8e8e8"/><path d="M6 13c1-2 12-6 14-4" fill="none" stroke="#474747" stroke-width="1.5"/><path d="M8 12c-1-4 2-7 5-7s4 3 4 5" fill="none" stroke="#e8e8e8" stroke-width="1.8"/><path d="M24 16c2 2 3 5 2.5 7a1.5 1.5 0 0 1-3 0c0-2 .3-4 .5-7z" fill="#e8e8e8"/></svg></div>
<div class="tb" style="top:406px"><svg width="32" height="31" viewBox="0 0 32 31"><defs><linearGradient id="gg" x1="0" x2="1"><stop offset="0" stop-color="#444"/><stop offset="1" stop-color="#ddd"/></linearGradient></defs><rect x="6" y="7" width="20" height="17" fill="url(#gg)" stroke="#e8e8e8" stroke-width="1.5"/></svg></div>
<div class="a" style="left:14px;top:444px;width:12px;height:2px;background:#5a5a5a"></div>
<div class="tb" style="top:450px"><svg width="32" height="31" viewBox="0 0 32 31"><rect x="8" y="8" width="16" height="15" fill="none" stroke="#e8e8e8" stroke-width="2" stroke-dasharray="3 2.5"/></svg></div>
<div class="tb" style="top:485px"><svg width="32" height="31" viewBox="0 0 32 31"><path d="M9 24c-4-1-3-7 1-10s5-8 10-8s6 5 3 9s-9 10-14 9z" fill="none" stroke="#e8e8e8" stroke-width="1.6" stroke-dasharray="2.5 2"/></svg></div>
<div class="tb" style="top:521px"><svg width="32" height="31" viewBox="0 0 32 31"><path d="M6 24l13-13l2 2L8 26z" fill="#e8e8e8"/><path d="M22 5v3M22 14v3M16 11h3M25 11h3M18 7l1.5 1.5M26 7l-1.5 1.5M26 15l-1.5-1.5" stroke="#e8e8e8" stroke-width="1.4"/><circle cx="22" cy="11" r="2.2" fill="#e8e8e8"/></svg></div>
<div class="tb" style="top:557px"><svg width="32" height="31" viewBox="0 0 32 31"><rect x="6" y="10" width="15" height="15" fill="none" stroke="#e8e8e8" stroke-width="1.8" stroke-dasharray="2.5 2"/><path d="M13 18l10-10l2.5 2.5l-10 10l-3 .8z" fill="#e8e8e8"/></svg></div>
<div class="tb" style="top:593px"><svg width="32" height="31" viewBox="0 0 32 31"><rect x="6" y="10" width="15" height="15" fill="none" stroke="#e8e8e8" stroke-width="1.8" stroke-dasharray="2.5 2"/><path d="M18 4l7 7l-7 7l-7-7z" fill="#e8e8e8"/><path d="M13 13l5 5l-1.5 1.5l-5-5z" fill="#474747"/></svg></div>
<div class="a" style="left:14px;top:629px;width:12px;height:2px;background:#5a5a5a"></div>
<div class="tb" style="top:637px"><svg width="32" height="31" viewBox="0 0 32 31"><path d="M6 6h20v6h-1.5c-.5-2.5-1.5-3.5-4-3.5h-2.5v15c0 1.2.6 1.5 3 1.5v1.5H11v-1.5c2.4 0 3-.3 3-1.5v-15h-2.5c-2.5 0-3.5 1-4 3.5H6z" fill="#e8e8e8"/></svg></div>
<div class="tb" style="top:673px"><svg width="32" height="31" viewBox="0 0 32 31"><path d="M10 5l-5 5l3 7h5" fill="none" stroke="#e8e8e8" stroke-width="1.6"/><path d="M10 5l7 4" stroke="#e8e8e8" stroke-width="1.6"/><path d="M14 13l13 6l-5 2l-2 5z" fill="#e8e8e8"/></svg></div>
<div class="tb" style="top:709px"><svg width="32" height="31" viewBox="0 0 32 31"><path d="M5 24l15-15a3 3 0 0 1 5 3L12 25H5z" fill="none" stroke="#e8e8e8" stroke-width="1.6"/><path d="M13 16l10-10a3 3 0 0 1 3 3L16 19z" fill="#e8e8e8"/></svg></div>
<div class="a" style="left:14px;top:745px;width:12px;height:2px;background:#5a5a5a"></div>
<div class="tb" style="top:751px"><svg width="32" height="31" viewBox="0 0 32 31"><path d="M6 26l1-5l10-10l4 4l-10 10z" fill="none" stroke="#e8e8e8" stroke-width="1.6"/><path d="M17 9l3-3l2 1l2-2l3 3l-2 2l1 2l-3 3z" fill="#e8e8e8"/></svg></div>
<div class="tb" style="top:787px"><svg width="32" height="31" viewBox="0 0 32 31"><path d="M11 26c-3-2-6-6-7-9c-.5-1.5 1.5-2 2.5-.5l3 3.5V7.5a1.3 1.3 0 0 1 2.6 0V14V5.5a1.3 1.3 0 0 1 2.6 0V14V6a1.3 1.3 0 0 1 2.6 0v8V8.5a1.3 1.3 0 0 1 2.6 0V19c0 3-1 5-3 7z" fill="#e8e8e8"/></svg></div>

<!-- ===== Color panel ===== -->
<div class="a" style="left:40px;top:90px;width:264px;height:934px;background:#262626"></div>
<div class="a" style="left:298px;top:90px;width:6px;height:934px;background:repeating-linear-gradient(#1f1f1f 0 2px,#2a2a2a 2px 3px)"></div>
<div class="ph" style="left:40px;top:90px;width:258px"><div class="pht" style="width:228px;top:6px">Color</div></div>
<svg class="a" style="left:265px;top:95px" width="30" height="14" viewBox="0 0 30 14"><path d="M7.5 4.5h-4v8h8v-4" fill="none" stroke="#bbb" stroke-width="1.4"/><path d="M7 8.5l5-5" stroke="#bbb" stroke-width="1.4"/><path d="M9 2h4.5v4.5z" fill="#bbb"/><path d="M20 3l7 7M27 3l-7 7" stroke="#bbb" stroke-width="2.6"/></svg>
<div class="a" style="left:40px;top:113px;width:258px;height:200px;background:#222527"></div>
<div class="a" style="left:58px;top:132px;width:27px;height:27px;background:#b08888"></div>
<div class="a" style="left:48px;top:122px;width:27px;height:27px;background:#000;border:2px solid #ff1010"></div>
<div class="a chk2" style="left:52px;top:167px;width:29px;height:29px;background-size:14px 14px;background-position:0 0,7px 7px;border:1px solid #bbb"></div>
<div class="t" style="left:48px;top:205px;font-size:12px;color:#d0d0d0;line-height:14px">R:0<br>G:0<br>B:0</div>
<div class="t" style="left:48px;top:254px;font-size:13px;color:#d0d0d0">#000000</div>
<div class="lb" style="left:50px;top:282px;border-radius:4px"><svg width="27" height="27" viewBox="0 0 27 27"><path d="M13.5 4a9.5 9 0 0 0 0 18c1.5 0 2-1 1.5-2.2s.3-2.3 2-2.3h2.5a4.5 4.5 0 0 0 4.5-4.5C24 8 19 4 13.5 4z" fill="#e8e8e8"/><g fill="#474747"><circle cx="9" cy="10" r="1.8"/><circle cx="13" cy="7.5" r="1.8"/><circle cx="18" cy="9" r="1.8"/><circle cx="8" cy="15" r="1.8"/></g></svg></div>
<div class="lb" style="left:81px;top:282px;border-radius:4px"><svg width="27" height="27" viewBox="0 0 27 27"><path d="M12 4a8 7.5 0 0 0 0 15c1.3 0 1.6-.8 1.2-1.8s.3-2 1.7-2H17a4 4 0 0 0 4-4C21 7 17 4 12 4z" fill="#e8e8e8"/><g fill="#474747"><circle cx="8" cy="9" r="1.5"/><circle cx="11.5" cy="7" r="1.5"/><circle cx="16" cy="8.5" r="1.5"/><circle cx="7.5" cy="13" r="1.5"/></g><rect x="13" y="17" width="11" height="6" fill="#999" stroke="#e8e8e8" stroke-width="1.2"/></svg></div>
<div class="a" style="left:117px;top:116px;width:149px;height:195px;background:linear-gradient(to bottom,rgba(0,0,0,0),#000),linear-gradient(to right,#fff,#f00)"></div>
<svg class="a" style="left:113px;top:300px" width="16" height="12" viewBox="0 0 16 12"><path d="M4 11a5 5 0 0 1 10 0" fill="none" stroke="#fff" stroke-width="1.2"/></svg>
<div class="a" style="left:271px;top:116px;width:25px;height:195px;background:linear-gradient(#f00,#f0f 17%,#00f 33%,#0ff 50%,#0f0 67%,#ff0 83%,#f00)"></div>
<svg class="a" style="left:273px;top:300px" width="22" height="11" viewBox="0 0 22 11"><path d="M3 11a8 8 0 0 1 16 0" fill="none" stroke="#fff" stroke-width="1.3"/></svg>
<div class="a" style="left:40px;top:313px;width:258px;height:27px;background:#222"></div>
<div class="a" style="left:41px;top:313px;width:40px;height:25px;background:linear-gradient(#3a3a3a,#2c2c2c);border:1px solid #3c3c3c;border-top:none;border-radius:0 0 3px 3px"></div>
<div class="t" style="left:46px;top:321px;font-size:12.7px;color:#cfcfcf">Color</div>
<div class="a" style="left:81px;top:313px;width:46px;height:21px;background:#242424;border:1px solid #333;border-top:none;border-radius:0 0 3px 3px"></div>
<div class="t" style="left:87px;top:318px;font-size:12.5px;color:#cfcfcf">Paleta</div>
<div class="a" style="left:40px;top:340px;width:258px;height:5px;background:repeating-linear-gradient(90deg,#262626 0 2px,#303030 2px 3px)"></div>

<!-- ===== Brush preview ===== -->
<div class="ph" style="left:40px;top:344px;width:258px"><div class="pht" style="width:228px;top:5px">Vista previa del pincel</div></div>
<svg class="a" style="left:265px;top:349px" width="30" height="14" viewBox="0 0 30 14"><path d="M7.5 4.5h-4v8h8v-4" fill="none" stroke="#bbb" stroke-width="1.4"/><path d="M7 8.5l5-5" stroke="#bbb" stroke-width="1.4"/><path d="M9 2h4.5v4.5z" fill="#bbb"/><path d="M20 3l7 7M27 3l-7 7" stroke="#bbb" stroke-width="2.6"/></svg>
<div class="a" style="left:40px;top:367px;width:41px;height:43px;background:#fff"></div>
<div class="t" style="left:56px;top:373px;font-size:11.5px;color:#3d8ad0">0.58</div>
<div class="a" style="left:57px;top:385px;width:8px;height:8px;border-radius:50%;background:#333"></div>
<div class="a chk2" style="left:81px;top:367px;width:217px;height:43px;background-size:8px 8px;background-position:0 0,4px 4px;border-left:1px solid #bbb"></div>
<svg class="a" style="left:81px;top:367px" width="217" height="43" viewBox="0 0 217 43"><g stroke="#111" stroke-linecap="round" fill="none"><path d="M19.2 19.9L21.0 19.3" stroke-width="0.60"/><path d="M21.0 19.3L23.4 18.5" stroke-width="0.69"/><path d="M23.4 18.5L26.1 17.6" stroke-width="0.78"/><path d="M26.1 17.6L29.2 16.5" stroke-width="0.87"/><path d="M29.2 16.5L32.6 15.4" stroke-width="0.95"/><path d="M32.6 15.4L36.1 14.2" stroke-width="1.04"/><path d="M36.1 14.2L39.7 13.0" stroke-width="1.13"/><path d="M39.7 13.0L43.4 11.8" stroke-width="1.22"/><path d="M43.4 11.8L46.9 10.7" stroke-width="1.31"/><path d="M46.9 10.7L50.4 9.6" stroke-width="1.40"/><path d="M50.4 9.6L53.6 8.7" stroke-width="1.48"/><path d="M53.6 8.7L56.5 8.0" stroke-width="1.57"/><path d="M56.5 8.0L59.2 7.4" stroke-width="1.66"/><path d="M59.2 7.4L61.7 6.8" stroke-width="1.75"/><path d="M61.7 6.8L64.2 6.3" stroke-width="1.84"/><path d="M64.2 6.3L66.6 5.8" stroke-width="1.93"/><path d="M66.6 5.8L68.9 5.3" stroke-width="2.01"/><path d="M68.9 5.3L71.2 5.0" stroke-width="2.10"/><path d="M69.1 6.8L70.9 3.5" stroke-width="1"/><path d="M71.2 5.0L73.4 4.7" stroke-width="2.19"/><path d="M71.4 6.5L73.2 3.2" stroke-width="1"/><path d="M73.4 4.7L75.6 4.5" stroke-width="2.28"/><path d="M73.6 6.3L75.5 2.9" stroke-width="1"/><path d="M75.6 4.5L77.9 4.4" stroke-width="2.37"/><path d="M75.7 6.1L77.8 2.7" stroke-width="1"/><path d="M77.9 4.4L80.1 4.3" stroke-width="2.46"/><path d="M77.9 6.1L80.1 2.6" stroke-width="1"/><path d="M80.1 4.3L82.4 4.4" stroke-width="2.55"/><path d="M80.0 6.1L82.4 2.6" stroke-width="1"/><path d="M82.4 4.4L84.7 4.6" stroke-width="2.63"/><path d="M82.2 6.3L84.8 2.8" stroke-width="1"/><path d="M84.7 4.6L87.1 4.9" stroke-width="2.72"/><path d="M84.5 6.5L87.3 3.0" stroke-width="1"/><path d="M87.1 4.9L89.4 5.4" stroke-width="2.81"/><path d="M86.7 6.8L89.8 3.4" stroke-width="1"/><path d="M89.4 5.4L91.8 5.9" stroke-width="2.90"/><path d="M88.9 7.3L92.2 3.9" stroke-width="1"/><path d="M91.8 5.9L94.1 6.6" stroke-width="2.99"/><path d="M91.2 7.9L94.7 4.6" stroke-width="1"/><path d="M94.1 6.6L96.5 7.3" stroke-width="3.08"/><path d="M93.5 8.6L97.1 5.3" stroke-width="1"/><path d="M96.5 7.3L98.9 8.2" stroke-width="3.16"/><path d="M95.8 9.4L99.6 6.1" stroke-width="1"/><path d="M98.9 8.2L101.2 9.0" stroke-width="3.33"/><path d="M98.0 10.3L102.0 6.9" stroke-width="1"/><path d="M101.2 9.0L103.6 10.0" stroke-width="3.54"/><path d="M100.3 11.4L104.5 7.6" stroke-width="1"/><path d="M103.6 10.0L105.9 10.9" stroke-width="3.75"/><path d="M102.6 12.4L106.9 8.5" stroke-width="1"/><path d="M105.9 10.9L108.3 11.8" stroke-width="3.96"/><path d="M104.9 13.5L109.3 9.3" stroke-width="1"/><path d="M108.3 11.8L110.6 12.8" stroke-width="4.16"/><path d="M107.2 14.6L111.7 10.1" stroke-width="1"/><path d="M110.6 12.8L113.0 13.7" stroke-width="4.35"/><path d="M109.5 15.6L114.1 10.9" stroke-width="1"/><path d="M113.0 13.7L115.4 14.6" stroke-width="4.53"/><path d="M111.8 16.7L116.6 11.7" stroke-width="1"/><path d="M115.4 14.6L117.8 15.7" stroke-width="4.70"/><path d="M114.1 17.7L119.1 12.6" stroke-width="1"/><path d="M117.8 15.7L120.3 16.7" stroke-width="4.86"/><path d="M116.5 18.8L121.7 13.6" stroke-width="1"/><path d="M120.3 16.7L122.8 17.9" stroke-width="5.00"/><path d="M118.9 19.9L124.3 14.7" stroke-width="1"/><path d="M122.8 17.9L125.3 19.0" stroke-width="5.12"/><path d="M121.3 21.1L126.8 15.7" stroke-width="1"/><path d="M125.3 19.0L127.8 20.1" stroke-width="5.23"/><path d="M123.8 22.3L129.3 16.8" stroke-width="1"/><path d="M127.8 20.1L130.2 21.3" stroke-width="5.32"/><path d="M126.2 23.5L131.8 17.9" stroke-width="1"/><path d="M130.2 21.3L132.6 22.4" stroke-width="5.40"/><path d="M128.7 24.7L134.2 19.0" stroke-width="1"/><path d="M132.6 22.4L134.9 23.4" stroke-width="5.45"/><path d="M131.1 25.9L136.5 20.0" stroke-width="1"/><path d="M134.9 23.4L137.1 24.4" stroke-width="5.49"/><path d="M133.4 26.9L138.7 20.9" stroke-width="1"/><path d="M137.1 24.4L139.2 25.3" stroke-width="5.50"/><path d="M135.6 28.0L140.8 21.8" stroke-width="1"/><path d="M139.2 25.3L141.2 26.1" stroke-width="5.49"/><path d="M137.8 28.9L142.6 22.5" stroke-width="1"/><path d="M141.2 26.1L143.0 26.8" stroke-width="5.47"/><path d="M139.8 29.7L144.4 23.2" stroke-width="1"/><path d="M143.0 26.8L144.7 27.5" stroke-width="5.42"/><path d="M141.6 30.3L146.1 23.9" stroke-width="1"/><path d="M144.7 27.5L146.2 28.0" stroke-width="5.36"/><path d="M143.3 31.0L147.6 24.5" stroke-width="1"/><path d="M146.2 28.0L147.7 28.6" stroke-width="5.27"/><path d="M145.0 31.5L149.0 25.1" stroke-width="1"/><path d="M147.7 28.6L149.1 29.1" stroke-width="5.17"/><path d="M146.5 32.0L150.3 25.7" stroke-width="1"/><path d="M149.1 29.1L150.4 29.5" stroke-width="5.05"/><path d="M148.0 32.4L151.5 26.2" stroke-width="1"/><path d="M150.4 29.5L151.7 29.9" stroke-width="4.91"/><path d="M149.4 32.8L152.7 26.6" stroke-width="1"/><path d="M151.7 29.9L153.0 30.3" stroke-width="4.76"/><path d="M150.8 33.1L153.8 27.1" stroke-width="1"/><path d="M153.0 30.3L154.2 30.6" stroke-width="4.60"/><path d="M152.2 33.4L155.0 27.4" stroke-width="1"/><path d="M154.2 30.6L155.5 30.8" stroke-width="4.42"/><path d="M153.6 33.6L156.1 27.8" stroke-width="1"/><path d="M155.5 30.8L156.8 31.0" stroke-width="4.24"/><path d="M155.0 33.8L157.3 28.1" stroke-width="1"/><path d="M156.8 31.0L158.2 31.2" stroke-width="4.04"/><path d="M156.5 33.8L158.5 28.4" stroke-width="1"/><path d="M158.2 31.2L159.6 31.3" stroke-width="3.84"/><path d="M158.0 33.9L159.8 28.6" stroke-width="1"/><path d="M159.6 31.3L160.9 31.4" stroke-width="3.63"/><path d="M159.5 33.9L161.0 28.8" stroke-width="1"/><path d="M160.9 31.4L162.1 31.4" stroke-width="3.41"/><path d="M160.9 33.8L162.2 29.0" stroke-width="1"/><path d="M162.1 31.4L163.4 31.3" stroke-width="3.80"/><path d="M162.2 34.0L163.3 28.7" stroke-width="1"/><path d="M163.4 31.3L164.6 31.3" stroke-width="3.65"/><path d="M163.6 33.9L164.4 28.7" stroke-width="1"/><path d="M164.6 31.3L165.9 31.1" stroke-width="3.50"/><path d="M164.9 33.7L165.6 28.7" stroke-width="1"/><path d="M165.9 31.1L167.2 30.9" stroke-width="3.34"/><path d="M166.2 33.4L166.9 28.6" stroke-width="1"/><path d="M167.2 30.9L168.5 30.7" stroke-width="3.19"/><path d="M167.5 33.2L168.2 28.5" stroke-width="1"/><path d="M168.5 30.7L170.0 30.5" stroke-width="3.04"/><path d="M168.9 32.8L169.6 28.4" stroke-width="1"/><path d="M170.0 30.5L171.5 30.2" stroke-width="2.89"/><path d="M170.4 32.5L171.2 28.2" stroke-width="1"/><path d="M171.5 30.2L173.2 29.9" stroke-width="2.73"/><path d="M171.9 32.1L172.8 28.0" stroke-width="1"/><path d="M173.2 29.9L175.0 29.5" stroke-width="2.58"/><path d="M173.5 31.6L174.6 27.7" stroke-width="1"/><path d="M175.0 29.5L177.1 29.1" stroke-width="2.43"/><path d="M175.4 31.2L176.7 27.4" stroke-width="1"/><path d="M177.1 29.1L179.4 28.5" stroke-width="2.28"/><path d="M177.4 30.6L179.0 27.0" stroke-width="1"/><path d="M179.4 28.5L182.0 27.9" stroke-width="2.12"/><path d="M179.7 30.0L181.6 26.5" stroke-width="1"/><path d="M182.0 27.9L184.7 27.2" stroke-width="1.97"/><path d="M182.3 29.2L184.3 25.9" stroke-width="1"/><path d="M184.7 27.2L187.4 26.5" stroke-width="1.82"/><path d="M187.4 26.5L190.2 25.7" stroke-width="1.67"/><path d="M190.2 25.7L193.0 25.0" stroke-width="1.51"/><path d="M193.0 25.0L195.6 24.3" stroke-width="1.36"/><path d="M195.6 24.3L198.0 23.6" stroke-width="1.21"/><path d="M198.0 23.6L200.2 23.1" stroke-width="1.06"/><path d="M200.2 23.1L202.0 22.6" stroke-width="0.90"/><path d="M202.0 22.6L203.4 22.2" stroke-width="0.75"/></g></svg>
<div class="a" style="left:40px;top:410px;width:258px;height:5px;background:repeating-linear-gradient(90deg,#262626 0 2px,#303030 2px 3px)"></div>

<!-- ===== Brush control ===== -->
<div class="ph" style="left:40px;top:415px;width:258px"><div class="pht" style="width:228px;top:6px">Control del pincel</div></div>
<svg class="a" style="left:265px;top:420px" width="30" height="14" viewBox="0 0 30 14"><path d="M7.5 4.5h-4v8h8v-4" fill="none" stroke="#bbb" stroke-width="1.4"/><path d="M7 8.5l5-5" stroke="#bbb" stroke-width="1.4"/><path d="M9 2h4.5v4.5z" fill="#bbb"/><path d="M20 3l7 7M27 3l-7 7" stroke="#bbb" stroke-width="2.6"/></svg>
<div class="a" style="left:40px;top:438px;width:258px;height:139px;background:#262626"></div>
<div class="a" style="left:51px;top:453px;width:186px;height:20px;background:#fff;border:1px solid #444"></div>
<div class="a" style="left:52px;top:454px;width:27px;height:18px;background:linear-gradient(90deg,#8ccaf8,#5aa6e4)"></div>
<div class="a" style="left:244px;top:451px;width:42px;height:25px;background:#3c3c3c;border-radius:3px"></div>
<div class="t" style="left:270px;top:456px;font-size:16px;color:#d8d8d8">8</div>
<div class="a" style="left:51px;top:485px;width:181px;height:19px;background:linear-gradient(90deg,#8ccaf8,#5aa2de 60%,#4f96d2);border:1px solid #3a3a3a"></div>
<div class="t" style="left:240px;top:487px;font-size:16px;color:#d8d8d8">100 %</div>
<div class="a" style="left:51px;top:512px;width:236px;height:51px;border:1px solid #3a3a3a;border-bottom:none;overflow:hidden;background:#242424">
 <div class="t" style="left:6px;top:8px;font-size:15.6px;color:#dcdcdc">Opacity by Pressure</div>
 <div class="a" style="left:157px;top:10px;width:11px;height:11px;border:1px solid #ccc"></div>
 <div class="t" style="left:6px;top:42px;font-size:15.6px;color:#dcdcdc">Ooze</div>
 <div class="a" style="left:67px;top:44px;width:104px;height:8px;border-radius:4px;background:#3a3a3a"></div>
 <div class="a" style="left:120px;top:41px;width:14px;height:14px;border-radius:50%;background:#888"></div>
 <div class="t" style="left:178px;top:42px;font-size:15.6px;color:#dcdcdc">3</div>
 <div class="a" style="left:220px;top:11px;width:13px;height:38px;border-radius:6px;background:linear-gradient(90deg,#2a2a2a,#3e3e3e)"></div>
 <div class="a" style="left:220px;top:12px;width:13px;height:7px;background:#5a5a5a;border-radius:2px"></div>
 <svg class="a" style="left:221px;top:3px" width="11" height="7" viewBox="0 0 11 7"><path d="M0 7h11L5.5 0z" fill="#888"/></svg>
 <svg class="a" style="left:221px;top:43px" width="11" height="7" viewBox="0 0 11 7"><path d="M0 0h11L5.5 7z" fill="#888"/></svg>
</div>
<div class="a" style="left:40px;top:575px;width:258px;height:5px;background:repeating-linear-gradient(90deg,#262626 0 2px,#303030 2px 3px)"></div>

<!-- ===== Brush list ===== -->
<div class="ph" style="left:40px;top:579px;width:258px"><div class="pht" style="width:228px;top:6px">Pincel: Pluma redonda</div></div>
<svg class="a" style="left:265px;top:584px" width="30" height="14" viewBox="0 0 30 14"><path d="M7.5 4.5h-4v8h8v-4" fill="none" stroke="#bbb" stroke-width="1.4"/><path d="M7 8.5l5-5" stroke="#bbb" stroke-width="1.4"/><path d="M9 2h4.5v4.5z" fill="#bbb"/><path d="M20 3l7 7M27 3l-7 7" stroke="#bbb" stroke-width="2.6"/></svg>
<div class="a" style="left:40px;top:602px;width:258px;height:422px;background:#262626"></div>
<div class="a" id="blist" style="left:42px;top:605px;width:234px;height:383px;overflow:hidden;background:#5c5c5c">
<div class="a" style="left:0;top:0px;width:234px;height:25px;background:#579ad2;border-top:1px solid #579ad2"></div>
<div class="a" style="left:3px;top:4px;width:18px;height:17px;background:#f33;border:1px solid #7a1515"></div>
<div class="t" style="left:27px;top:4px;font-size:17px;font-weight:700;color:#f2f2f2">8</div>
<div class="t" style="left:67px;top:4px;font-size:17px;font-weight:700;color:#f2f2f2">Pluma redonda</div>
<svg class="a" style="left:213px;top:4px" width="18" height="18" viewBox="0 0 18 18"><g fill="#fff"><circle cx="9" cy="9" r="5.5"/><path d="M8 1h2v4H8zM8 13h2v4H8zM1 8h4v2H1zM13 8h4v2h-4zM3 4.4L4.4 3l2.8 2.8l-1.4 1.4zM10.8 12.2l1.4-1.4l2.8 2.8L13.6 15zM3 13.6l2.8-2.8l1.4 1.4L4.4 15zM10.8 5.8L13.6 3L15 4.4l-2.8 2.8z"/></g><circle cx="9" cy="9" r="2" fill="#579ad2"/></svg>
<div class="a" style="left:0;top:25px;width:234px;height:25px;background:#5c5c5c;border-top:1px solid #6a6a6a"></div>
<div class="a" style="left:3px;top:29px;width:18px;height:17px;background:#f33;border:1px solid #7a1515"></div>
<div class="t" style="left:27px;top:30px;font-size:16px;font-weight:400;color:#f2f2f2">8</div>
<div class="t" style="left:67px;top:30px;font-size:16px;font-weight:400;color:#f2f2f2">Pluma redonda (suave)</div>
<div class="a" style="left:0;top:50px;width:234px;height:25px;background:#5c5c5c;border-top:1px solid #6a6a6a"></div>
<div class="a" style="left:3px;top:54px;width:18px;height:17px;background:#f33;border:1px solid #7a1515"></div>
<div class="t" style="left:27px;top:55px;font-size:16px;font-weight:400;color:#f2f2f2">8</div>
<div class="t" style="left:67px;top:55px;font-size:16px;font-weight:400;color:#f2f2f2">Pluma redonda (Liso)</div>
<div class="a" style="left:0;top:75px;width:234px;height:25px;background:#5c5c5c;border-top:1px solid #6a6a6a"></div>
<div class="a" style="left:3px;top:79px;width:18px;height:17px;background:#f33;border:1px solid #7a1515"></div>
<div class="t" style="left:27px;top:80px;font-size:16px;font-weight:400;color:#f2f2f2">20</div>
<div class="t" style="left:67px;top:80px;font-size:16px;font-weight:400;color:#f2f2f2">Pluma estilográfica</div>
<div class="a" style="left:0;top:100px;width:234px;height:25px;background:#5c5c5c;border-top:1px solid #6a6a6a"></div>
<div class="a" style="left:3px;top:104px;width:18px;height:17px;background:#f33;border:1px solid #7a1515"></div>
<div class="t" style="left:27px;top:105px;font-size:16px;font-weight:400;color:#f2f2f2">20</div>
<div class="t" style="left:67px;top:105px;font-size:16px;font-weight:400;color:#f2f2f2">Pluma estilográfica (suave)</div>
<div class="a" style="left:0;top:125px;width:234px;height:25px;background:#5c5c5c;border-top:1px solid #6a6a6a"></div>
<div class="a" style="left:3px;top:129px;width:18px;height:17px;background:#f33;border:1px solid #7a1515"></div>
<div class="t" style="left:27px;top:130px;font-size:16px;font-weight:400;color:#f2f2f2">20</div>
<div class="t" style="left:67px;top:130px;font-size:16px;font-weight:400;color:#f2f2f2">Pluma estilográfica (Liso)</div>
<div class="a" style="left:0;top:150px;width:234px;height:25px;background:#5c5c5c;border-top:1px solid #6a6a6a"></div>
<div class="a" style="left:3px;top:154px;width:18px;height:17px;background:#f33;border:1px solid #7a1515"></div>
<div class="t" style="left:27px;top:155px;font-size:16px;font-weight:400;color:#f2f2f2">10</div>
<div class="t" style="left:67px;top:155px;font-size:16px;font-weight:400;color:#f2f2f2">Lapicera Escolar</div>
<div class="a" style="left:0;top:175px;width:234px;height:25px;background:#5c5c5c;border-top:1px solid #6a6a6a"></div>
<div class="a" style="left:3px;top:179px;width:18px;height:17px;background:#f33;border:1px solid #7a1515"></div>
<div class="t" style="left:27px;top:180px;font-size:16px;font-weight:400;color:#f2f2f2">5</div>
<div class="t" style="left:67px;top:180px;font-size:16px;font-weight:400;color:#f2f2f2">Lapicera Escolar (sin presión)</div>
<div class="a" style="left:0;top:200px;width:234px;height:25px;background:#5c5c5c;border-top:1px solid #6a6a6a"></div>
<div class="a" style="left:3px;top:204px;width:18px;height:17px;background:#f33;border:1px solid #7a1515"></div>
<div class="t" style="left:27px;top:205px;font-size:16px;font-weight:400;color:#f2f2f2">10</div>
<div class="t" style="left:67px;top:205px;font-size:16px;font-weight:400;color:#f2f2f2">Lapicera Escolar (suave)</div>
<div class="a" style="left:0;top:225px;width:234px;height:25px;background:#5c5c5c;border-top:1px solid #6a6a6a"></div>
<div class="a" style="left:3px;top:229px;width:18px;height:17px;background:#f33;border:1px solid #7a1515"></div>
<div class="t" style="left:27px;top:230px;font-size:16px;font-weight:400;color:#f2f2f2">10</div>
<div class="t" style="left:67px;top:230px;font-size:16px;font-weight:400;color:#f2f2f2">Lapicera Escolar (Liso)</div>
<div class="a" style="left:0;top:250px;width:234px;height:25px;background:#5c5c5c;border-top:1px solid #6a6a6a"></div>
<div class="a" style="left:3px;top:254px;width:18px;height:17px;background:#f33;border:1px solid #7a1515"></div>
<div class="t" style="left:27px;top:255px;font-size:16px;font-weight:400;color:#f2f2f2">15</div>
<div class="t" style="left:67px;top:255px;font-size:16px;font-weight:400;color:#f2f2f2">Pluma para dibujo 2</div>
<div class="a" style="left:0;top:275px;width:234px;height:25px;background:#5c5c5c;border-top:1px solid #6a6a6a"></div>
<div class="a" style="left:3px;top:279px;width:18px;height:17px;background:#f33;border:1px solid #7a1515"></div>
<div class="t" style="left:27px;top:280px;font-size:16px;font-weight:400;color:#f2f2f2">15</div>
<div class="t" style="left:67px;top:280px;font-size:16px;font-weight:400;color:#f2f2f2">Pluma para dibujo 2 (realista)</div>
<div class="a" style="left:0;top:300px;width:234px;height:25px;background:#5c5c5c;border-top:1px solid #6a6a6a"></div>
<div class="a" style="left:3px;top:304px;width:18px;height:17px;background:#1b1;border:1px solid #0d4a0d"></div>
<div class="t" style="left:27px;top:305px;font-size:16px;font-weight:400;color:#f2f2f2">20</div>
<div class="t" style="left:67px;top:305px;font-size:16px;font-weight:400;color:#f2f2f2">Pluma con contorno</div>
<div class="a" style="left:0;top:325px;width:234px;height:25px;background:#5c5c5c;border-top:1px solid #6a6a6a"></div>
<div class="a" style="left:3px;top:329px;width:18px;height:17px;background:#1b1;border:1px solid #0d4a0d"></div>
<div class="t" style="left:27px;top:330px;font-size:16px;font-weight:400;color:#f2f2f2">20</div>
<div class="t" style="left:67px;top:330px;font-size:16px;font-weight:400;color:#f2f2f2">Pluma con contorno (sin presión)</div>
<div class="a" style="left:0;top:350px;width:234px;height:25px;background:#5c5c5c;border-top:1px solid #6a6a6a"></div>
<div class="a" style="left:3px;top:354px;width:18px;height:17px;background:#1b1;border:1px solid #0d4a0d"></div>
<div class="t" style="left:27px;top:355px;font-size:16px;font-weight:400;color:#f2f2f2">20</div>
<div class="t" style="left:67px;top:355px;font-size:16px;font-weight:400;color:#f2f2f2">Pluma con contorno (suave)</div>
<div class="a" style="left:0;top:375px;width:234px;height:25px;background:#5c5c5c;border-top:1px solid #6a6a6a"></div>
<div class="a" style="left:3px;top:379px;width:18px;height:17px;background:#ee0;border:1px solid #6a6a00"></div>
<div class="t" style="left:27px;top:380px;font-size:16px;font-weight:400;color:#f2f2f2">20</div>
<div class="t" style="left:67px;top:380px;font-size:16px;font-weight:400;color:#f2f2f2">Pincel (Liso)</div>
</div>
<div class="a" style="left:277px;top:617px;width:17px;height:365px;border-radius:8px;background:linear-gradient(90deg,#262626,#333 60%,#2a2a2a)"></div>
<div class="a" style="left:278px;top:642px;width:15px;height:66px;border-radius:6px;background:linear-gradient(90deg,#555,#666 50%,#555)"></div>
<svg class="a" style="left:280px;top:604px" width="12" height="9" viewBox="0 0 12 9"><path d="M0 9h12L6 1z" fill="#777"/></svg>
<svg class="a" style="left:280px;top:979px" width="12" height="9" viewBox="0 0 12 9"><path d="M0 0h12L6 8z" fill="#777"/></svg>
<div class="a" style="left:42px;top:988px;width:254px;height:35px;background:#262626;border:1px solid #333"></div>
<div class="lb" style="left:46px;top:992px"><svg width="27" height="27" viewBox="0 0 27 27"><path d="M8 16a4 4 0 0 1 0-8a5.5 5.5 0 0 1 10.5-1a4 4 0 0 1 .5 9z" fill="#e8e8e8"/><path d="M13.5 11v12M9.5 19l4 4l4-4" fill="none" stroke="#474747" stroke-width="3.5"/><path d="M13.5 11v11M10 18.5l3.5 3.5l3.5-3.5" fill="none" stroke="#e8e8e8" stroke-width="2"/></svg></div>
<div class="lb" style="left:77px;top:992px"><svg width="27" height="27" viewBox="0 0 27 27"><path d="M8 5h7l5 5v12H8z" fill="none" stroke="#e8e8e8" stroke-width="1.5"/></svg></div>
<div class="lb" style="left:108px;top:992px;width:34px"><svg width="34" height="27" viewBox="0 0 34 27"><path d="M6 5h7l4 4v13H6z" fill="none" stroke="#e8e8e8" stroke-width="1.5"/><rect x="8" y="13" width="3" height="3" fill="#e8e8e8"/><rect x="11" y="16" width="3" height="3" fill="#e8e8e8"/><path d="M21 13h7l-3.5 4z" fill="#e8e8e8"/></svg></div>
<div class="lb" style="left:146px;top:992px"><svg width="27" height="27" viewBox="0 0 27 27"><path d="M8 5h7l5 5v12H8z" fill="none" stroke="#e8e8e8" stroke-width="1.5"/><path d="M16 11.5c-1-1-5-1-5 1s5 1 5 3.5s-4 2-5 1" fill="none" stroke="#e8e8e8" stroke-width="1.4"/></svg></div>
<div class="lb" style="left:177px;top:992px"><svg width="27" height="27" viewBox="0 0 27 27"><path d="M5 8h6l2 2h9v11H5z" fill="#e8e8e8"/></svg></div>
<div class="lb" style="left:208px;top:992px"><svg width="27" height="27" viewBox="0 0 27 27"><rect x="6" y="10" width="10" height="11" fill="none" stroke="#e8e8e8" stroke-width="1.5"/><path d="M10 10V6h11v11h-5" fill="none" stroke="#e8e8e8" stroke-width="1.5"/></svg></div>
<div class="vl" style="left:240px;top:999px;height:12px;background:#555"></div>
<div class="lb" style="left:246px;top:992px"><svg width="27" height="27" viewBox="0 0 27 27"><path d="M6 7h15M11 7V5h5v2M7.5 9h12v13h-12z" fill="none" stroke="#e8e8e8" stroke-width="1.8"/><path d="M11 11v9M13.5 11v9M16 11v9" stroke="#e8e8e8" stroke-width="1.5"/></svg></div>

<!-- ===== canvas scrollbars ===== -->
<div class="a" style="left:1617px;top:114px;width:20px;height:910px;background:#252525"></div>
<div class="a" style="left:304px;top:1004px;width:1333px;height:20px;background:#252525"></div>
<svg class="a" style="left:1620px;top:114px" width="15" height="10" viewBox="0 0 15 10"><path d="M3 9h9L7.5 2z" fill="#8a8a8a"/></svg>
<div class="a" style="left:1618px;top:124px;width:18px;height:860px;border-radius:8px;background:linear-gradient(90deg,#262626,#333 50%,#2a2a2a)"></div>
<div class="a" style="left:1619px;top:428px;width:17px;height:178px;border-radius:6px;background:linear-gradient(90deg,#606060,#6e6e6e 50%,#606060)"></div>
<svg class="a" style="left:1620px;top:993px" width="15" height="10" viewBox="0 0 15 10"><path d="M3 1h9L7.5 8z" fill="#8a8a8a"/></svg>
<div class="a" style="left:318px;top:1005px;width:1297px;height:18px;border-radius:8px;background:linear-gradient(#333,#2a2a2a)"></div>
<div class="a" style="left:698px;top:1005px;width:249px;height:18px;border-radius:6px;background:linear-gradient(#727272,#5e5e5e)"></div>
<svg class="a" style="left:305px;top:1007px" width="10" height="14" viewBox="0 0 10 14"><path d="M8 2v10L2 7z" fill="#8a8a8a"/></svg>
<svg class="a" style="left:1625px;top:1007px" width="10" height="14" viewBox="0 0 10 14"><path d="M2 2v10l6-5z" fill="#8a8a8a"/></svg>
<div class="a" style="left:1636px;top:984px;width:1px;height:40px;background:#3a5a88"></div>
<div class="a" style="left:1600px;top:1023px;width:37px;height:1px;background:#3a5a88"></div>
<div class="a" style="left:1637px;top:90px;width:6px;height:934px;background:repeating-linear-gradient(#1f1f1f 0 2px,#2a2a2a 2px 3px)"></div>

<!-- ===== Navegador ===== -->
<div class="a" style="left:1643px;top:90px;width:277px;height:934px;background:#262626"></div>
<div class="ph" style="left:1643px;top:90px;width:277px"><div class="pht" style="width:247px;top:6px">Navegador</div></div>
<svg class="a" style="left:1886px;top:95px" width="30" height="14" viewBox="0 0 30 14"><path d="M7.5 4.5h-4v8h8v-4" fill="none" stroke="#bbb" stroke-width="1.4"/><path d="M7 8.5l5-5" stroke="#bbb" stroke-width="1.4"/><path d="M9 2h4.5v4.5z" fill="#bbb"/><path d="M20 3l7 7M27 3l-7 7" stroke="#bbb" stroke-width="2.6"/></svg>
<div class="a" style="left:1643px;top:113px;width:277px;height:35px;background:#242424"></div>
<div class="b" style="left:1647px;top:118px"><svg width="27" height="27" viewBox="0 0 27 27"><circle cx="11" cy="11" r="6.5" fill="none" stroke="#e8e8e8" stroke-width="1.8"/><path d="M16 16l5 5" stroke="#e8e8e8" stroke-width="2.6"/><path d="M9.5 9l2-1.5v7" fill="none" stroke="#e8e8e8" stroke-width="1.8"/></svg></div>
<div class="vl" style="left:1679px;top:126px;height:11px;background:#4a6a88"></div>
<div class="b" style="left:1685px;top:118px"><svg width="27" height="27" viewBox="0 0 27 27"><circle cx="11" cy="11" r="6.5" fill="none" stroke="#e8e8e8" stroke-width="1.8"/><path d="M16 16l5 5" stroke="#e8e8e8" stroke-width="2.6"/><path d="M11 7.5v7M7.5 11h7" stroke="#e8e8e8" stroke-width="1.8"/></svg></div>
<div class="b" style="left:1716px;top:118px"><svg width="27" height="27" viewBox="0 0 27 27"><rect x="4.5" y="5.5" width="18" height="16" fill="none" stroke="#e8e8e8" stroke-width="1.3"/><path d="M7 8l3 3M20 8l-3 3M7 19l3-3M20 19l-3-3" stroke="#bbb" stroke-width="1"/></svg></div>
<div class="b" style="left:1747px;top:118px"><svg width="27" height="27" viewBox="0 0 27 27"><circle cx="11" cy="11" r="6.5" fill="none" stroke="#e8e8e8" stroke-width="1.8"/><path d="M16 16l5 5" stroke="#e8e8e8" stroke-width="2.6"/><path d="M7.5 11h7" stroke="#e8e8e8" stroke-width="1.8"/></svg></div>
<div class="vl" style="left:1780px;top:126px;height:11px;background:#4a6a88"></div>
<div class="b" style="left:1785px;top:118px"><svg width="27" height="27" viewBox="0 0 27 27"><path d="M7 9a8 8 0 1 0 5-3" fill="none" stroke="#e8e8e8" stroke-width="1.8"/><path d="M9 3l3 3l-3.5 2.5" fill="#e8e8e8"/><path d="M9 12l7-2.5l2 6l-7 2.5z" fill="#e8e8e8"/></svg></div>
<div class="b" style="left:1816px;top:118px;background:#1f1f1f;border-color:#4a4a4a"><svg width="27" height="27" viewBox="0 0 27 27"><rect x="8" y="8" width="11" height="11" fill="#e8e8e8"/><path d="M6 8h15M6 19h15M8 6v15M19 6v15" stroke="#e8e8e8" stroke-width="1"/></svg></div>
<div class="b" style="left:1847px;top:118px"><svg width="27" height="27" viewBox="0 0 27 27"><path d="M20 9a8 8 0 1 1-5-3" fill="none" stroke="#e8e8e8" stroke-width="1.8"/><path d="M18 3l-3 3l3.5 2.5" fill="#e8e8e8"/><path d="M11 9.5l7 2.5l-2 6l-7-2.5z" fill="#e8e8e8"/></svg></div>
<div class="vl" style="left:1879px;top:126px;height:11px;background:#4a6a88"></div>
<div class="b" style="left:1885px;top:118px"><svg width="27" height="27" viewBox="0 0 27 27"><rect x="4" y="12" width="7" height="10" fill="#e8e8e8"/><rect x="16.5" y="12.5" width="6" height="9" fill="none" stroke="#e8e8e8" stroke-width="1.3"/><path d="M13.5 10v13" stroke="#e8e8e8" stroke-width="1" stroke-dasharray="1.5 1"/><path d="M8 9a6 5 0 0 1 11 0" fill="none" stroke="#e8e8e8" stroke-width="1.3"/></svg></div>
<div class="a" style="left:1643px;top:148px;width:277px;height:238px;background:#474747"></div>
<div class="a" style="left:1643px;top:190px;width:277px;height:155px;background:#fff"></div>
<svg class="a" style="left:0;top:0" width="1920" height="1080" viewBox="0 0 1920 1080"><defs><clipPath id="nc"><rect x="1643" y="190" width="277" height="155"/></clipPath></defs><g clip-path="url(#nc)"><g transform="translate(1618.408 196.061) scale(0.09208 0.09157)" fill="none" stroke="#111" stroke-linecap="round" stroke-linejoin="round"><path d="M1166.0 250.0C1163.3 246.7 1156.3 236.5 1150.0 230.0C1143.7 223.5 1138.8 218.0 1128.0 211.0C1117.2 204.0 1101.7 195.3 1085.0 188.0C1068.3 180.7 1047.2 171.4 1028.0 167.0C1008.8 162.6 989.2 160.5 970.0 161.5C950.8 162.5 932.2 166.8 913.0 173.0C893.8 179.2 870.5 191.2 855.0 199.0C839.5 206.8 830.8 212.7 820.0 220.0C809.2 227.3 799.3 234.3 790.0 243.0C780.7 251.7 771.5 262.2 764.0 272.0C756.5 281.8 750.2 292.8 745.0 302.0C739.8 311.2 736.5 317.8 733.0 327.0C729.5 336.2 725.9 347.7 724.0 357.0C722.1 366.3 721.8 374.2 721.5 383.0C721.2 391.8 721.6 402.0 722.0 410.0C722.4 418.0 723.7 427.5 724.0 431.0" stroke-width="12"/><path d="M1152.0 252.0C1148.3 247.5 1138.8 232.8 1130.0 225.0C1121.2 217.2 1116.0 212.8 1099.0 205.0C1082.0 197.2 1052.0 183.5 1028.0 178.0C1004.0 172.5 979.7 170.2 955.0 172.0C930.3 173.8 898.3 183.7 880.0 189.0C861.7 194.3 856.0 198.3 845.0 204.0C834.0 209.7 823.5 215.3 814.0 223.0C804.5 230.7 795.8 240.2 788.0 250.0C780.2 259.8 773.3 271.2 767.0 282.0C760.7 292.8 755.0 305.0 750.0 315.0C745.0 325.0 740.5 331.2 737.0 342.0C733.5 352.8 731.0 368.7 729.0 380.0C727.0 391.3 725.8 402.2 725.0 410.0C724.2 417.8 724.2 424.2 724.0 427.0" stroke-width="12"/><path d="M1142.0 224.0C1143.7 226.0 1149.0 232.0 1152.0 236.0C1155.0 240.0 1158.7 246.0 1160.0 248.0" stroke-width="12"/><path d="M723.0 433.0C720.8 434.8 716.2 436.5 710.0 444.0C703.8 451.5 692.2 470.8 686.0 478.0C679.8 485.2 678.3 481.5 673.0 487.0C667.7 492.5 658.1 503.0 654.0 511.0C649.9 519.0 649.4 531.0 648.5 535.0" stroke-width="12"/><path d="M1154.0 258.0C1157.2 258.8 1158.5 260.8 1173.0 263.0C1187.5 265.2 1216.2 268.7 1241.0 271.0C1265.8 273.3 1308.5 276.0 1322.0 277.0" stroke-width="12"/><path d="M654.0 524.0C656.3 521.2 658.7 517.8 668.0 507.0C677.3 496.2 694.7 471.0 710.0 459.0C725.3 447.0 745.0 441.8 760.0 435.0C775.0 428.2 787.7 423.8 800.0 418.0C812.3 412.2 821.8 406.7 834.0 400.0C846.2 393.3 860.0 385.3 873.0 378.0C886.0 370.7 897.5 363.0 912.0 356.0C926.5 349.0 940.7 343.3 960.0 336.0C979.3 328.7 1002.0 319.8 1028.0 312.0C1054.0 304.2 1090.7 294.3 1116.0 289.0C1141.3 283.7 1159.2 282.2 1180.0 280.0C1200.8 277.8 1218.8 276.0 1241.0 276.0C1263.2 276.0 1296.2 278.2 1313.0 280.0C1329.8 281.8 1334.5 282.3 1342.0 287.0C1349.5 291.7 1355.3 300.8 1358.0 308.0C1360.7 315.2 1360.3 323.8 1358.0 330.0C1355.7 336.2 1354.3 339.8 1344.0 345.0C1333.7 350.2 1313.2 354.7 1296.0 361.0C1278.8 367.3 1254.7 377.8 1241.0 383.0C1227.3 388.2 1218.5 390.5 1214.0 392.0" stroke-width="12"/><path d="M650.0 537.0C652.3 535.0 658.0 530.7 664.0 525.0C670.0 519.3 676.2 510.5 686.0 503.0C695.8 495.5 707.7 489.2 723.0 480.0C738.3 470.8 758.8 458.7 778.0 448.0C797.2 437.3 809.3 430.3 838.0 416.0C866.7 401.7 913.5 376.3 950.0 362.0C986.5 347.7 1027.0 338.8 1057.0 330.0C1087.0 321.2 1109.0 314.5 1130.0 309.0C1151.0 303.5 1164.5 299.8 1183.0 297.0C1201.5 294.2 1221.3 292.5 1241.0 292.0C1260.7 291.5 1285.0 292.5 1301.0 294.0C1317.0 295.5 1329.0 297.0 1337.0 301.0C1345.0 305.0 1347.0 315.2 1349.0 318.0" stroke-width="12"/><path d="M648.0 538.0C651.2 541.0 657.7 552.0 667.0 556.0C676.3 560.0 688.0 562.3 704.0 562.0C720.0 561.7 753.2 555.3 763.0 554.0" stroke-width="12"/><path d="M1074.0 331.0C1078.3 329.7 1092.2 325.2 1100.0 323.0C1107.8 320.8 1117.5 318.8 1121.0 318.0" stroke-width="12"/><path d="M1121.0 318.0C1130.8 318.0 1163.2 315.5 1180.0 318.0C1196.8 320.5 1213.5 329.0 1222.0 333.0C1230.5 337.0 1230.8 338.8 1231.0 342.0C1231.2 345.2 1223.7 347.0 1223.0 352.0C1222.3 357.0 1225.0 365.7 1227.0 372.0C1229.0 378.3 1232.8 382.0 1235.0 390.0C1237.2 398.0 1239.2 415.0 1240.0 420.0" stroke-width="12"/><path d="M757.0 457.0C756.5 464.2 753.2 484.8 754.0 500.0C754.8 515.2 758.7 534.3 762.0 548.0C765.3 561.7 769.7 571.2 774.0 582.0C778.3 592.8 780.3 605.0 788.0 613.0C795.7 621.0 805.5 625.5 820.0 630.0C834.5 634.5 865.8 638.3 875.0 640.0" stroke-width="12"/><path d="M827.0 426.0C826.0 434.3 821.3 457.7 821.0 476.0C820.7 494.3 822.3 517.8 825.0 536.0C827.7 554.2 832.7 570.2 837.0 585.0C841.3 599.8 846.8 616.2 851.0 625.0C855.2 633.8 860.2 635.8 862.0 638.0" stroke-width="12"/><path d="M1225.0 344.0C1226.3 349.0 1231.2 364.0 1233.0 374.0C1234.8 384.0 1235.5 399.0 1236.0 404.0" stroke-width="12"/><path d="M1214.0 530.0L1218.0 559.0" stroke-width="12"/><path d="M1218.0 559.0L1217.0 572.0" stroke-width="12"/><path d="M1217.0 572.0C1216.5 574.2 1216.0 576.7 1214.0 585.0C1212.0 593.3 1207.3 612.0 1205.0 622.0C1202.7 632.0 1200.8 641.2 1200.0 645.0" stroke-width="12"/><path d="M1200.0 645.0C1199.2 648.0 1197.2 653.8 1195.0 663.0C1192.8 672.2 1189.0 691.7 1187.0 700.0C1185.0 708.3 1183.7 710.8 1183.0 713.0" stroke-width="12"/><path d="M1171.0 428.0C1170.2 433.2 1164.8 444.5 1166.0 459.0C1167.2 473.5 1174.3 496.8 1178.0 515.0C1181.7 533.2 1186.3 559.2 1188.0 568.0" stroke-width="12"/><path d="M880.0 646.0C888.3 650.0 917.5 663.2 930.0 670.0C942.5 676.8 947.5 680.3 955.0 687.0C962.5 693.7 969.5 701.2 975.0 710.0C980.5 718.8 984.2 730.8 988.0 740.0C991.8 749.2 992.7 758.0 998.0 765.0C1003.3 772.0 1010.2 778.0 1020.0 782.0C1029.8 786.0 1046.0 788.3 1057.0 789.0C1068.0 789.7 1075.2 788.7 1086.0 786.0C1096.8 783.3 1108.7 778.2 1122.0 773.0C1135.3 767.8 1157.5 762.3 1166.0 755.0C1174.5 747.7 1170.5 738.2 1173.0 729.0C1175.5 719.8 1179.7 704.8 1181.0 700.0" stroke-width="12"/><path d="M992.0 770.0C994.2 771.7 999.5 777.3 1005.0 780.0C1010.5 782.7 1021.7 785.0 1025.0 786.0" stroke-width="12"/><path d="M954.0 785.0C955.7 782.2 959.8 774.8 964.0 768.0C968.2 761.2 974.2 751.2 979.0 744.0C983.8 736.8 990.7 728.2 993.0 725.0" stroke-width="12"/><path d="M956.0 785.0C958.2 786.8 962.0 791.7 969.0 796.0C976.0 800.3 985.8 806.8 998.0 811.0C1010.2 815.2 1027.3 819.2 1042.0 821.0C1056.7 822.8 1071.3 823.2 1086.0 822.0C1100.7 820.8 1115.5 818.3 1130.0 814.0C1144.5 809.7 1163.0 802.0 1173.0 796.0C1183.0 790.0 1185.7 783.8 1190.0 778.0C1194.3 772.2 1197.5 763.8 1199.0 761.0" stroke-width="12"/><path d="M955.0 788.0C955.7 793.3 957.8 810.5 959.0 820.0C960.2 829.5 961.0 836.2 962.0 845.0C963.0 853.8 964.5 868.3 965.0 873.0" stroke-width="12"/><path d="M1202.0 762.0C1202.3 768.3 1203.5 782.8 1204.0 800.0C1204.5 817.2 1204.8 854.2 1205.0 865.0" stroke-width="12"/><path d="M1181.0 719.0C1182.8 722.5 1188.5 733.5 1192.0 740.0C1195.5 746.5 1200.3 755.0 1202.0 758.0" stroke-width="12"/><path d="M965.0 878.0C970.2 882.3 983.5 897.3 996.0 904.0C1008.5 910.7 1023.2 915.7 1040.0 918.0C1056.8 920.3 1079.8 919.2 1097.0 918.0C1114.2 916.8 1129.5 914.2 1143.0 911.0C1156.5 907.8 1169.0 903.2 1178.0 899.0C1187.0 894.8 1192.5 890.5 1197.0 886.0C1201.5 881.5 1203.7 874.3 1205.0 872.0" stroke-width="12"/><path d="M1051.0 740.0C1052.8 742.0 1058.7 748.2 1062.0 752.0C1065.3 755.8 1069.5 761.2 1071.0 763.0" stroke-width="12"/><path d="M1064.0 758.0L1078.0 785.0" stroke-width="12"/><path d="M1135.0 747.0L1120.0 776.0" stroke-width="12"/><path d="M988.0 735.0L1003.0 725.0" stroke-width="12"/><path d="M1106.0 926.0C1107.0 931.7 1110.3 947.0 1112.0 960.0C1113.7 973.0 1115.3 996.7 1116.0 1004.0" stroke-width="12"/><path d="M1113.0 926.0C1114.2 931.7 1118.7 947.0 1120.0 960.0C1121.3 973.0 1120.8 996.7 1121.0 1004.0" stroke-width="12"/><path d="M1173.0 905.0C1173.5 912.5 1175.3 933.5 1176.0 950.0C1176.7 966.5 1176.8 995.0 1177.0 1004.0" stroke-width="12"/><path d="M770.0 589.0C762.8 593.0 732.3 604.5 727.0 613.0C721.7 621.5 736.2 635.5 738.0 640.0" stroke-width="12"/><path d="M748.0 615.0L800.0 640.0" stroke-width="12"/><path d="M757.0 600.0C751.8 602.0 730.8 608.3 726.0 612.0C721.2 615.7 726.0 617.7 728.0 622.0C730.0 626.3 737.2 631.7 738.0 638.0C738.8 644.3 736.2 651.8 733.0 660.0C729.8 668.2 719.0 680.2 719.0 687.0C719.0 693.8 721.3 694.7 733.0 701.0C744.7 707.3 769.7 714.2 789.0 725.0C808.3 735.8 831.8 754.0 849.0 766.0C866.2 778.0 882.0 792.2 892.0 797.0C902.0 801.8 903.0 801.8 909.0 795.0C915.0 788.2 923.5 769.3 928.0 756.0C932.5 742.7 935.2 726.2 936.0 715.0C936.8 703.8 933.5 693.3 933.0 689.0" stroke-width="12"/><path d="M748.0 616.0C756.8 620.5 782.2 634.8 801.0 643.0C819.8 651.2 838.5 659.0 861.0 665.0C883.5 671.0 923.5 676.7 936.0 679.0" stroke-width="12"/><path d="M777.0 600.0C779.0 602.3 777.8 608.3 789.0 614.0C800.2 619.7 828.8 628.7 844.0 634.0C859.2 639.3 874.0 644.0 880.0 646.0" stroke-width="12"/><path d="M745.0 643.0L810.0 715.0" stroke-width="12"/><path d="M828.0 712.0C833.3 711.5 848.8 709.5 860.0 709.0C871.2 708.5 889.2 709.0 895.0 709.0" stroke-width="12"/><path d="M892.0 744.0C891.8 746.7 890.5 755.3 891.0 760.0C891.5 764.7 893.2 770.5 895.0 772.0C896.8 773.5 900.0 771.5 902.0 769.0C904.0 766.5 905.8 760.7 907.0 757.0C908.2 753.3 908.7 748.7 909.0 747.0" stroke-width="12"/><path d="M938.0 690.0C942.2 697.8 958.2 725.0 963.0 737.0C967.8 749.0 966.3 757.8 967.0 762.0" stroke-width="12"/><path d="M957.0 788.0L960.0 860.0" stroke-width="12"/><path d="M733.0 699.0C725.5 708.2 703.7 737.2 688.0 754.0C672.3 770.8 653.2 788.3 639.0 800.0C624.8 811.7 609.8 818.0 603.0 824.0C596.2 830.0 599.2 832.7 598.0 836.0C596.8 839.3 596.3 842.7 596.0 844.0" stroke-width="12"/><path d="M606.0 824.0L639.0 819.0" stroke-width="12"/><path d="M649.0 821.0C655.0 817.8 674.2 807.2 685.0 802.0C695.8 796.8 709.2 792.0 714.0 790.0" stroke-width="12"/><path d="M685.0 795.0L685.0 860.0" stroke-width="12"/><path d="M690.0 814.0L745.0 802.0" stroke-width="12"/><path d="M766.0 817.0C772.2 822.7 791.5 839.7 803.0 851.0C814.5 862.3 826.5 873.8 835.0 885.0C843.5 896.2 848.3 906.8 854.0 918.0C859.7 929.2 864.7 938.2 869.0 952.0C873.3 965.8 878.2 992.8 880.0 1001.0" stroke-width="12"/><path d="M854.0 929.0L873.0 1001.0" stroke-width="12"/><path d="M765.0 839.0L797.0 851.0" stroke-width="12"/><path d="M723.0 785.0L788.0 732.0" stroke-width="12"/><path d="M598.0 829.0C599.2 835.0 603.2 851.8 605.0 865.0C606.8 878.2 608.7 899.5 609.0 908.0C609.3 916.5 607.3 914.7 607.0 916.0" stroke-width="12"/><path d="M609.0 908.0C613.3 908.7 626.2 913.2 635.0 912.0C643.8 910.8 653.5 906.3 662.0 901.0C670.5 895.7 681.7 887.7 686.0 880.0C690.3 872.3 688.0 868.2 688.0 855.0C688.0 841.8 677.8 813.5 686.0 801.0C694.2 788.5 728.5 783.5 737.0 780.0" stroke-width="12"/><path d="M605.0 825.0L637.0 820.0" stroke-width="12"/><path d="M650.0 823.0C656.0 818.3 671.5 802.2 686.0 795.0C700.5 787.8 728.5 782.5 737.0 780.0" stroke-width="12"/><path d="M690.0 818.0L716.0 795.0" stroke-width="12"/><path d="M694.0 812.0L745.0 801.0" stroke-width="12"/><path d="M600.0 842.0C595.3 849.5 582.7 870.2 572.0 887.0C561.3 903.8 550.0 923.2 536.0 943.0C522.0 962.8 496.0 995.5 488.0 1006.0" stroke-width="12"/><path d="M604.0 845.0C600.0 852.0 589.3 870.7 580.0 887.0C570.7 903.3 560.2 923.2 548.0 943.0C535.8 962.8 513.8 995.5 507.0 1006.0" stroke-width="12"/><path d="M609.0 848.0C606.2 854.5 600.0 871.2 592.0 887.0C584.0 902.8 571.8 923.2 561.0 943.0C550.2 962.8 532.7 995.5 527.0 1006.0" stroke-width="12"/><path d="M1181.0 634.0L1210.0 643.0" stroke-width="12"/><path d="M1214.0 643.0C1219.7 644.3 1234.3 643.2 1248.0 651.0C1261.7 658.8 1280.0 676.3 1296.0 690.0C1312.0 703.7 1330.0 721.3 1344.0 733.0C1358.0 744.7 1369.5 750.8 1380.0 760.0C1390.5 769.2 1402.5 783.3 1407.0 788.0" stroke-width="12"/><path d="M1222.0 647.0C1228.8 652.0 1248.7 666.8 1263.0 677.0C1277.3 687.2 1292.5 695.8 1308.0 708.0C1323.5 720.2 1341.8 735.8 1356.0 750.0C1370.2 764.2 1378.8 777.3 1393.0 793.0C1407.2 808.7 1429.8 832.3 1441.0 844.0C1452.2 855.7 1451.3 853.3 1460.0 863.0C1468.7 872.7 1481.5 887.2 1493.0 902.0C1504.5 916.8 1523.0 943.7 1529.0 952.0" stroke-width="12"/><path d="M1212.0 646.0C1218.0 653.3 1236.0 673.5 1248.0 690.0C1260.0 706.5 1275.2 728.7 1284.0 745.0C1292.8 761.3 1295.8 772.7 1301.0 788.0C1306.2 803.3 1311.7 821.7 1315.0 837.0C1318.3 852.3 1319.7 869.2 1321.0 880.0C1322.3 890.8 1322.7 898.3 1323.0 902.0" stroke-width="12"/><path d="M1284.0 745.0L1306.0 764.0" stroke-width="12"/><path d="M1323.0 902.0C1321.2 903.2 1315.7 901.8 1312.0 909.0C1308.3 916.2 1304.0 929.3 1301.0 945.0C1298.0 960.7 1295.2 993.3 1294.0 1003.0" stroke-width="12"/><path d="M1316.0 909.0L1305.0 1003.0" stroke-width="12"/><path d="M1309.0 930.0L1293.0 1003.0" stroke-width="12"/><path d="M1312.0 974.0L1420.0 1003.0" stroke-width="12"/><path d="M1525.0 953.0C1528.2 952.5 1536.8 951.9 1544.0 950.0C1551.2 948.1 1562.7 942.3 1568.0 941.5C1573.3 940.7 1571.2 942.4 1576.0 945.0C1580.8 947.6 1590.2 955.3 1597.0 957.0C1603.8 958.7 1613.7 955.3 1617.0 955.0" stroke-width="12"/><path d="M1529.0 955.0C1530.0 957.3 1534.3 964.2 1535.0 969.0C1535.7 973.8 1534.7 978.2 1533.0 984.0C1531.3 989.8 1526.3 1000.7 1525.0 1004.0" stroke-width="12"/><path d="M1562.0 1006.0C1562.0 1003.3 1561.3 994.2 1562.0 990.0C1562.7 985.8 1563.0 983.0 1566.0 981.0C1569.0 979.0 1573.8 977.8 1580.0 978.0C1586.2 978.2 1598.7 980.0 1603.0 982.0C1607.3 984.0 1604.8 986.0 1606.0 990.0C1607.2 994.0 1609.3 1003.3 1610.0 1006.0" stroke-width="12"/><ellipse cx="1032" cy="473" rx="77.5" ry="78.5" stroke-width="12"/><ellipse cx="1035.7" cy="473.3" rx="56.8" ry="57.8" stroke-width="12"/><ellipse cx="1209" cy="466" rx="29" ry="67.4" stroke-width="12"/><ellipse cx="1209.6" cy="469" rx="22.8" ry="53" stroke-width="12"/><ellipse cx="641" cy="868.5" rx="8" ry="12.7" stroke-width="12" transform="rotate(20 641 868.5)"/><ellipse cx="1143.9" cy="944.5" rx="6" ry="17" stroke-width="12"/><path d="M967.7 442.7A71 71 0 0 1 1056.3 406.0" stroke-width="12"/><path d="M967.9 509.7A74 74 0 0 1 989.6 412.1" stroke-width="12"/><path d="M993.9 444.0A51 51 0 0 1 1051.5 424.8" stroke-width="12"/><path d="M985.0 491.8A54 54 0 0 1 1008.7 426.5" stroke-width="12"/></g><g fill="none" stroke="#111" stroke-width="1" stroke-linecap="round"><path d="M1652.0 307.5C1656.3 307.0 1669.9 305.8 1678.0 304.5C1686.1 303.2 1696.0 299.8 1700.7 300.0C1705.4 300.2 1705.1 305.0 1706.0 306.0"/><path d="M1652.0 309.0C1651.8 311.0 1649.3 316.7 1650.6 321.0C1651.9 325.3 1655.1 332.2 1659.7 334.8C1664.3 337.4 1670.7 337.8 1678.0 336.3C1685.3 334.8 1699.0 329.5 1703.8 325.7C1708.6 321.9 1706.4 316.9 1706.8 313.6C1707.2 310.3 1706.1 307.3 1706.0 306.0"/><path d="M1676.0 272.0C1674.0 274.9 1668.3 283.4 1664.3 289.3C1660.3 295.2 1654.0 304.5 1652.0 307.5"/><path d="M1705.3 301.4C1706.1 300.4 1706.7 297.1 1710.0 295.3C1713.3 293.5 1721.0 290.8 1725.0 290.8C1729.0 290.8 1732.0 292.5 1734.0 295.3C1736.0 298.1 1737.2 303.9 1737.2 307.5C1737.2 311.1 1737.0 314.6 1734.0 316.6C1731.0 318.6 1723.5 319.1 1719.0 319.6C1714.5 320.1 1708.8 319.6 1706.8 319.6"/><path d="M1725.0 298.4L1735.0 301.0"/><path d="M1729.0 304.0L1737.0 307.0"/><path d="M1703.8 322.7C1706.8 322.2 1716.0 320.9 1722.0 319.6C1728.0 318.3 1737.0 315.8 1740.0 315.0"/><path d="M1705.3 327.2C1708.6 326.9 1719.4 326.4 1725.0 325.7C1730.6 324.9 1736.4 323.2 1738.7 322.7"/><path d="M1731.0 256.0C1732.5 258.5 1738.0 265.4 1740.0 271.0C1742.0 276.6 1743.2 283.7 1743.0 289.3C1742.8 294.9 1739.2 299.4 1738.7 304.5C1738.2 309.6 1739.8 317.1 1740.0 319.6"/><path d="M1670.0 336.3L1676.4 345.5"/><path d="M1719.0 334.8L1722.0 345.5"/><path d="M1744.8 325.7L1746.3 345.5"/><path d="M1685.6 330.0L1703.8 334.8"/><path d="M1734.0 257.4C1737.6 260.7 1750.6 272.4 1755.4 277.0C1760.2 281.6 1761.7 283.4 1763.0 284.7"/><path d="M1740.0 289.3C1741.0 289.8 1743.0 291.6 1746.3 292.3C1749.6 293.1 1757.7 293.6 1760.0 293.8"/><path d="M1764.5 289.3C1765.8 289.8 1770.5 290.8 1772.0 292.3C1773.5 293.8 1774.6 297.6 1773.6 298.4C1772.6 299.2 1767.3 297.2 1766.0 297.0"/><path d="M1776.7 284.7C1778.1 283.2 1781.8 279.3 1785.0 276.0C1788.2 272.7 1793.8 266.8 1795.6 265.0"/><path d="M1777.0 282.0C1777.0 280.3 1776.0 274.8 1777.0 272.0C1778.0 269.2 1780.7 266.3 1783.0 265.0C1785.3 263.7 1789.0 263.5 1791.0 264.0C1793.0 264.5 1794.3 267.3 1795.0 268.0"/><path d="M1781.0 281.0C1781.8 282.4 1783.7 288.7 1785.8 289.3C1787.9 289.9 1791.7 286.9 1793.4 284.7C1795.1 282.5 1795.6 277.4 1796.0 276.0"/><path d="M1782.7 290.8C1784.2 290.6 1789.1 289.1 1791.9 289.3C1794.7 289.6 1796.9 291.6 1799.4 292.3C1801.9 293.1 1805.5 293.2 1807.0 293.8C1808.5 294.4 1809.6 295.2 1808.6 296.0C1807.6 296.8 1803.1 298.2 1801.0 298.4C1798.9 298.6 1796.8 297.2 1796.0 297.0"/><path d="M1784.3 301.4C1784.0 302.4 1780.9 306.2 1782.7 307.5C1784.5 308.8 1792.7 310.5 1795.0 309.0C1797.3 307.5 1796.2 300.2 1796.4 298.4"/><path d="M1781.0 312.0C1780.2 314.7 1777.5 322.7 1776.0 328.0C1774.5 333.3 1772.7 341.3 1772.0 344.0"/><path d="M1792.0 312.0C1792.7 313.8 1794.4 319.4 1796.4 322.7C1798.4 326.0 1802.5 329.5 1804.0 331.8C1805.5 334.1 1806.3 335.8 1805.5 336.3C1804.7 336.8 1801.2 336.6 1799.4 334.8C1797.7 333.0 1796.6 328.5 1795.0 325.7C1793.4 322.9 1790.8 319.3 1790.0 318.0"/><path d="M1773.0 300.0L1784.0 301.0"/><circle cx="1787.3" cy="280" r="3"/></g><rect x="1647" y="207" width="120" height="81" fill="none" stroke="#f00" stroke-width="2"/></g></svg>
<div class="a" style="left:1643px;top:386px;width:277px;height:27px;background:#222"></div>
<div class="a" style="left:1643px;top:386px;width:72px;height:22px;background:#262626;border:1px solid #383838;border-top:none;border-radius:0 0 3px 3px"></div>
<div class="t" style="left:1649px;top:392px;font-size:12.6px;color:#d4d4d4">Referencia</div>
<div class="a" style="left:1715px;top:386px;width:73px;height:25px;background:linear-gradient(#3a3a3a,#2b2b2b);border:1px solid #3c3c3c;border-top:none;border-radius:0 0 3px 3px"></div>
<div class="t" style="left:1721px;top:394px;font-size:12.6px;color:#d4d4d4">Navegador</div>
<div class="a" style="left:1643px;top:412px;width:277px;height:5px;background:repeating-linear-gradient(90deg,#262626 0 2px,#303030 2px 3px)"></div>

<!-- ===== Capa ===== -->
<div class="ph" style="left:1643px;top:417px;width:277px"><div class="pht" style="width:247px;top:6px">Capa</div></div>
<svg class="a" style="left:1886px;top:422px" width="30" height="14" viewBox="0 0 30 14"><path d="M7.5 4.5h-4v8h8v-4" fill="none" stroke="#bbb" stroke-width="1.4"/><path d="M7 8.5l5-5" stroke="#bbb" stroke-width="1.4"/><path d="M9 2h4.5v4.5z" fill="#bbb"/><path d="M20 3l7 7M27 3l-7 7" stroke="#bbb" stroke-width="2.6"/></svg>
<div class="a" style="left:1643px;top:440px;width:277px;height:91px;background:#232323"></div>
<div class="t" style="left:1649px;top:451px;font-size:12.6px;color:#d4d4d4">Opacidad</div>
<div class="a" style="left:1717px;top:447px;width:153px;height:19px;background:linear-gradient(90deg,#8ccaf8,#5aa2de 60%,#4f96d2);border:1px solid #3a3a3a"></div>
<div class="t" style="left:1877px;top:451px;font-size:12.6px;color:#d4d4d4">100 %</div>
<div class="t" style="left:1649px;top:480px;font-size:12.6px;color:#d4d4d4">Combinación</div>
<div class="a" style="left:1729px;top:474px;width:184px;height:23px;background:#474747;border-radius:3px"></div>
<div class="t" style="left:1732px;top:480px;font-size:12.6px;color:#cfcfcf">Normal</div>
<svg class="a" style="left:1900px;top:484px" width="9" height="6" viewBox="0 0 9 6"><path d="M0 0h9L4.5 5z" fill="#aaa"/></svg>
<div class="a" style="left:1652px;top:511px;width:11px;height:11px;border:1px solid #ccc"></div>
<div class="t" style="left:1670px;top:510px;font-size:12.7px;color:#d4d4d4">Proteger alfa</div>
<div class="a" style="left:1757px;top:511px;width:11px;height:11px;border:1px solid #ccc"></div>
<div class="t" style="left:1775px;top:510px;font-size:12.7px;color:#d4d4d4">Recorte</div>
<div class="a" style="left:1841px;top:511px;width:11px;height:11px;border:1px solid #ccc"></div>
<div class="t" style="left:1859px;top:510px;font-size:12.7px;color:#d4d4d4">Bloquear</div>
<div class="a" style="left:1643px;top:531px;width:277px;height:328px;background:#262626"></div>
<div class="a" style="left:1646px;top:531px;width:251px;height:328px;overflow:hidden;background:#2a2a2a">
<div class="a" style="left:0;top:-22px;width:251px;height:49px;background:#5c5c5c"></div>
<div class="a chk2" style="left:41px;top:-9px;width:44px;height:24px;background-size:8px 8px;background-position:0 0,4px 4px;border:1px solid #888"></div>
<div class="a" style="left:72px;top:0px;width:13px;height:5px;background:#333"></div>
<div class="t" style="left:106px;top:-6px;font-size:15.5px;font-weight:400;color:#f4f4f4">Capa34</div>
<div class="a" style="left:0;top:28px;width:251px;height:49px;background:#5c5c5c"></div>
<div class="a chk2" style="left:41px;top:41px;width:44px;height:24px;background-size:8px 8px;background-position:0 0,4px 4px;border:1px solid #888"></div>
<div class="a" style="left:41px;top:41px;width:22px;height:10px;background:linear-gradient(90deg,#223,#556 50%,#ddd)"></div>
<div class="t" style="left:106px;top:44px;font-size:15.5px;font-weight:400;color:#f4f4f4">Capa9</div>
<div class="a" style="left:0;top:78px;width:251px;height:49px;background:#5c5c5c"></div>
<div class="a chk2" style="left:41px;top:91px;width:44px;height:24px;background-size:8px 8px;background-position:0 0,4px 4px;border:1px solid #888"></div>
<svg class="a" style="left:41px;top:91px" width="44" height="24" viewBox="0 0 44 24"><path d="M26 3v14M14 10l12 9M8 19h30" stroke="#999" stroke-width="0.6" fill="none"/></svg>
<div class="t" style="left:106px;top:94px;font-size:15.5px;font-weight:400;color:#f4f4f4">Capa1</div>
<div class="a" style="left:0;top:128px;width:251px;height:49px;background:#5c5c5c"></div>
<div class="a chk2" style="left:41px;top:141px;width:44px;height:24px;background-size:8px 8px;background-position:0 0,4px 4px;border:1px solid #888"></div>
<div class="a" style="left:41px;top:141px;width:12px;height:7px;background:#445"></div>
<div class="t" style="left:106px;top:144px;font-size:15.5px;font-weight:400;color:#f4f4f4">Layer12</div>
<div class="a" style="left:0;top:178px;width:251px;height:49px;background:#5c5c5c"></div>
<div class="a" style="left:24px;top:178px;width:227px;height:49px;background:#579ad2"></div>
<div class="a" style="left:5px;top:196px;width:12px;height:12px;border-radius:50%;background:#c8c8c8;border:1px solid #e0e0e0"></div>
<div class="a chk2" style="left:41px;top:191px;width:44px;height:24px;background-size:8px 8px;background-position:0 0,4px 4px;border:1px solid #888"></div>
<svg class="a" style="left:41px;top:191px" width="44" height="24" viewBox="0 0 44 24"><path d="M19 19l2-6l3 1l1 5M21 13a1.5 1.5 0 1 1 2 0" stroke="#555" stroke-width="0.7" fill="none"/></svg>
<div class="t" style="left:106px;top:194px;font-size:17px;font-weight:700;color:#f4f4f4">Capa35</div>
<svg class="a" style="left:225px;top:192px" width="22" height="22" viewBox="0 0 18 18"><g fill="#fff"><circle cx="9" cy="9" r="5.5"/><path d="M8 1h2v4H8zM8 13h2v4H8zM1 8h4v2H1zM13 8h4v2h-4zM3 4.4L4.4 3l2.8 2.8l-1.4 1.4zM10.8 12.2l1.4-1.4l2.8 2.8L13.6 15zM3 13.6l2.8-2.8l1.4 1.4L4.4 15zM10.8 5.8L13.6 3L15 4.4l-2.8 2.8z"/></g><circle cx="9" cy="9" r="2" fill="#579ad2"/></svg>
<div class="a" style="left:0;top:228px;width:251px;height:49px;background:#5c5c5c"></div>
<div class="a" style="left:5px;top:246px;width:12px;height:12px;border-radius:50%;background:#c8c8c8;border:1px solid #e0e0e0"></div>
<div class="a chk2" style="left:41px;top:241px;width:44px;height:24px;background-size:8px 8px;background-position:0 0,4px 4px;border:1px solid #888"></div>
<svg class="a" style="left:41px;top:241px" width="44" height="24" viewBox="0 0 44 24"><path d="M5 23c0-6 3-9 5-10m2-3a4 3 0 1 1 0 .1M6 9h9M9 14l6 4l3 5" stroke="#333" stroke-width="0.8" fill="none"/></svg>
<div class="t" style="left:106px;top:244px;font-size:15.5px;font-weight:400;color:#f4f4f4">Capa34</div>
<div class="a" style="left:0;top:278px;width:251px;height:49px;background:#5c5c5c"></div>
<div class="a chk2" style="left:41px;top:291px;width:44px;height:24px;background-size:8px 8px;background-position:0 0,4px 4px;border:1px solid #888"></div>
<svg class="a" style="left:41px;top:291px" width="44" height="24" viewBox="0 0 44 24"><path d="M3 23c0-6 3-9 6-10m2-3a4 3.5 0 1 1 0 .1M5 9h10M8 14l7 4l2 5M17 16c2 0 3 2 4 4M20 23l2-6l3 1l1 5" stroke="#222" stroke-width="0.9" fill="none"/></svg>
<div class="t" style="left:106px;top:294px;font-size:15.5px;font-weight:400;color:#f4f4f4">Capa32</div>
</div>
<div class="a" style="left:1898px;top:545px;width:18px;height:303px;border-radius:8px;background:linear-gradient(90deg,#262626,#363636 50%,#2a2a2a)"></div>
<div class="a" style="left:1899px;top:561px;width:16px;height:246px;border-radius:7px;background:linear-gradient(90deg,#5a5a5a,#6a6a6a 50%,#5a5a5a)"></div>
<svg class="a" style="left:1901px;top:531px" width="12" height="9" viewBox="0 0 12 9"><path d="M1 8h10L6 1z" fill="#888"/></svg>
<svg class="a" style="left:1901px;top:848px" width="12" height="9" viewBox="0 0 12 9"><path d="M1 1h10L6 8z" fill="#888"/></svg>
<div class="a" style="left:1645px;top:858px;width:273px;height:35px;background:#262626;border:1px solid #333"></div>
<div class="lb" style="left:1649px;top:862px"><svg width="27" height="27" viewBox="0 0 27 27"><path d="M8 5h7l5 5v12H8z" fill="none" stroke="#e8e8e8" stroke-width="1.5"/></svg></div>
<div class="lb" style="left:1680px;top:862px"><svg width="27" height="27" viewBox="0 0 27 27"><path d="M8 5h7l5 5v12H8z" fill="none" stroke="#e8e8e8" stroke-width="1.5"/><text x="14" y="18.5" font-size="9" fill="#e8e8e8" text-anchor="middle" font-family="Liberation Sans">8</text></svg></div>
<div class="lb" style="left:1711px;top:862px"><svg width="27" height="27" viewBox="0 0 27 27"><path d="M8 5h7l5 5v12H8z" fill="none" stroke="#e8e8e8" stroke-width="1.5"/><text x="14" y="18.5" font-size="9" fill="#e8e8e8" text-anchor="middle" font-family="Liberation Sans">1</text></svg></div>
<div class="lb" style="left:1742px;top:862px;width:34px"><svg width="34" height="27" viewBox="0 0 34 27"><path d="M12 20H6V5h7l4 4v4" fill="none" stroke="#e8e8e8" stroke-width="1.5"/><path d="M15 14v8M11 18h8" stroke="#e8e8e8" stroke-width="2.2"/><path d="M23 13h7l-3.5 4z" fill="#e8e8e8"/></svg></div>
<div class="lb" style="left:1780px;top:862px"><svg width="27" height="27" viewBox="0 0 27 27"><path d="M5 8h6l2 2h9v11H5z" fill="#e8e8e8"/></svg></div>
<div class="vl" style="left:1812px;top:869px;height:12px;background:#555"></div>
<div class="lb" style="left:1818px;top:862px"><svg width="27" height="27" viewBox="0 0 27 27"><rect x="6" y="10" width="10" height="11" fill="none" stroke="#e8e8e8" stroke-width="1.5"/><path d="M10 10V6h11v11h-5" fill="none" stroke="#e8e8e8" stroke-width="1.5"/></svg></div>
<div class="lb" style="left:1849px;top:862px"><svg width="27" height="27" viewBox="0 0 27 27"><path d="M5 5h6v6H5zM5 15h6v6H5z" fill="none" stroke="#e8e8e8" stroke-width="1.3"/><path d="M5 11l6-6M5 21l6-6" stroke="#e8e8e8" stroke-width="1.3"/><rect x="16" y="10" width="7" height="6" fill="#e8e8e8"/><path d="M11 13h4" stroke="#e8e8e8" stroke-width="1"/></svg></div>
<div class="vl" style="left:1881px;top:869px;height:12px;background:#555"></div>
<div class="lb" style="left:1887px;top:862px"><svg width="27" height="27" viewBox="0 0 27 27"><path d="M6 7h15M11 7V5h5v2M7.5 9h12v13h-12z" fill="none" stroke="#e8e8e8" stroke-width="1.8"/><path d="M11 11v9M13.5 11v9M16 11v9" stroke="#e8e8e8" stroke-width="1.5"/></svg></div>
<div class="a" style="left:1643px;top:894px;width:277px;height:6px;background:repeating-linear-gradient(90deg,#262626 0 2px,#303030 2px 3px)"></div>

<!-- ===== Tamaño del Pincel ===== -->
<div class="ph" style="left:1643px;top:900px;width:277px"><div class="pht" style="width:247px;top:6px">Tamaño del Pincel</div></div>
<svg class="a" style="left:1886px;top:905px" width="30" height="14" viewBox="0 0 30 14"><path d="M7.5 4.5h-4v8h8v-4" fill="none" stroke="#bbb" stroke-width="1.4"/><path d="M7 8.5l5-5" stroke="#bbb" stroke-width="1.4"/><path d="M9 2h4.5v4.5z" fill="#bbb"/><path d="M20 3l7 7M27 3l-7 7" stroke="#bbb" stroke-width="2.6"/></svg>
<div class="a" style="left:1643px;top:923px;width:258px;height:101px;background:#3a3a3a;overflow:hidden">
<div class="a" style="left:1px;top:2px;width:48px;height:60px;background:#5c5c5c"></div>
<div class="a" style="left:1px;top:64px;width:48px;height:50px;background:#5c5c5c"></div>
<div class="a" style="left:24.4px;top:26.4px;width:1.2px;height:1.2px;border-radius:50%;background:#eee"></div>
<div class="a" style="left:22.4px;top:86.4px;width:5.2px;height:5.2px;border-radius:50%;background:#f0f0f0"></div>
<div class="t" style="left:0px;top:49px;width:50px;text-align:center;font-size:11px;color:#f0f0f0">1</div>
<div class="a" style="left:51px;top:2px;width:48px;height:60px;background:#5c5c5c"></div>
<div class="a" style="left:51px;top:64px;width:48px;height:50px;background:#5c5c5c"></div>
<div class="a" style="left:74.1px;top:26.1px;width:1.8px;height:1.8px;border-radius:50%;background:#eee"></div>
<div class="a" style="left:71.8px;top:85.8px;width:6.4px;height:6.4px;border-radius:50%;background:#f0f0f0"></div>
<div class="t" style="left:50px;top:49px;width:50px;text-align:center;font-size:11px;color:#f0f0f0">1.5</div>
<div class="a" style="left:101px;top:2px;width:48px;height:60px;background:#5c5c5c"></div>
<div class="a" style="left:101px;top:64px;width:48px;height:50px;background:#5c5c5c"></div>
<div class="a" style="left:123.7px;top:25.7px;width:2.6px;height:2.6px;border-radius:50%;background:#eee"></div>
<div class="a" style="left:120.0px;top:84.0px;width:10.0px;height:10.0px;border-radius:50%;background:#f0f0f0"></div>
<div class="t" style="left:100px;top:49px;width:50px;text-align:center;font-size:11px;color:#f0f0f0">2</div>
<div class="a" style="left:151px;top:2px;width:48px;height:60px;background:#5c5c5c"></div>
<div class="a" style="left:151px;top:64px;width:48px;height:50px;background:#5c5c5c"></div>
<div class="a" style="left:173.3px;top:25.3px;width:3.4px;height:3.4px;border-radius:50%;background:#eee"></div>
<div class="a" style="left:168.8px;top:82.8px;width:12.4px;height:12.4px;border-radius:50%;background:#f0f0f0"></div>
<div class="t" style="left:150px;top:49px;width:50px;text-align:center;font-size:11px;color:#f0f0f0">3</div>
<div class="a" style="left:201px;top:2px;width:48px;height:60px;background:#5c5c5c"></div>
<div class="a" style="left:201px;top:64px;width:48px;height:50px;background:#5c5c5c"></div>
<div class="a" style="left:222.7px;top:24.7px;width:4.6px;height:4.6px;border-radius:50%;background:#eee"></div>
<div class="a" style="left:217.5px;top:81.5px;width:15.0px;height:15.0px;border-radius:50%;background:#f0f0f0"></div>
<div class="t" style="left:200px;top:49px;width:50px;text-align:center;font-size:11px;color:#f0f0f0">4</div>
</div>
<div class="a" style="left:1901px;top:923px;width:19px;height:101px;background:#262626"></div>
<div class="a" style="left:1902px;top:936px;width:17px;height:77px;border-radius:8px;background:linear-gradient(90deg,#262626,#363636 50%,#2a2a2a)"></div>
<div class="a" style="left:1902px;top:936px;width:17px;height:25px;border-radius:7px;background:linear-gradient(90deg,#5a5a5a,#6a6a6a 50%,#5a5a5a)"></div>
<svg class="a" style="left:1904px;top:925px" width="12" height="9" viewBox="0 0 12 9"><path d="M1 8h10L6 1z" fill="#888"/></svg>
<svg class="a" style="left:1904px;top:1015px" width="12" height="9" viewBox="0 0 12 9"><path d="M1 1h10L6 8z" fill="#888"/></svg>

<!-- status bar -->
<div class="a" style="left:0;top:1024px;width:1920px;height:27px;background:#252525;border-top:1px solid #303030;border-bottom:1px solid #3c3c3c"></div>
<div class="t" style="left:6px;top:1032px;font-size:14.7px;color:#cdcdcd">2960 * 1662 pixel</div>
<div class="t" style="left:132px;top:1032px;font-size:14.7px;color:#cdcdcd">(21.5 * 12.1cm)</div>
<div class="t" style="left:242px;top:1032px;font-size:14.7px;color:#cdcdcd">350 dpi</div>
<div class="t" style="left:304px;top:1032px;font-size:14.7px;color:#cdcdcd">100 %</div>
<div class="t" style="left:356px;top:1032px;font-size:14.7px;color:#cdcdcd">( 650, 854 )</div>
<div class="t" style="left:441px;top:1032px;font-size:14.7px;color:#cdcdcd">Para trazar una línea recta, mantenga pulsada la tecla Mayús. Para cambiar el tamaño del pincel, mantenga pulsada las teclas Ctrl + Alt y arrastre</div>
<div class="a" style="left:0;top:1051px;width:1920px;height:29px;background:#1c1c1c"></div>
<div class="a" style="left:885px;top:1063px;width:150px;height:3px;border-radius:2px;background:#8a8a8a"></div>
<div class="t" style="left:1688px;top:1059px;font-size:13px;color:#f0f0f0">ESP</div>
<svg class="a" style="left:1734px;top:1054px" width="90" height="24" viewBox="0 0 90 24">
<path d="M3 10a13 13 0 0 1 18 0M6 13a9 9 0 0 1 12 0M9 16a5 5 0 0 1 6 0" fill="none" stroke="#f0f0f0" stroke-width="1.6"/><circle cx="12" cy="19" r="1.5" fill="#f0f0f0"/>
<path d="M33 9h3l4-4v14l-4-4h-3z" fill="none" stroke="#f0f0f0" stroke-width="1.4"/><path d="M43 8a6 6 0 0 1 0 8M46 6a9 9 0 0 1 0 12" fill="none" stroke="#f0f0f0" stroke-width="1.4"/>
<rect x="62" y="8" width="18" height="10" rx="2" fill="none" stroke="#f0f0f0" stroke-width="1.4"/><path d="M81 11v4" stroke="#f0f0f0" stroke-width="2"/><path d="M66 5l2 4M70 4l-1 5" stroke="#f0f0f0" stroke-width="1.3"/><path d="M65 10h8l-2 6h-6z" fill="#f0f0f0"/>
</svg>
<div class="t" style="left:1838px;top:1058px;font-size:14.8px;color:#f0f0f0">08:45 p. m.</div>
</body></html>
